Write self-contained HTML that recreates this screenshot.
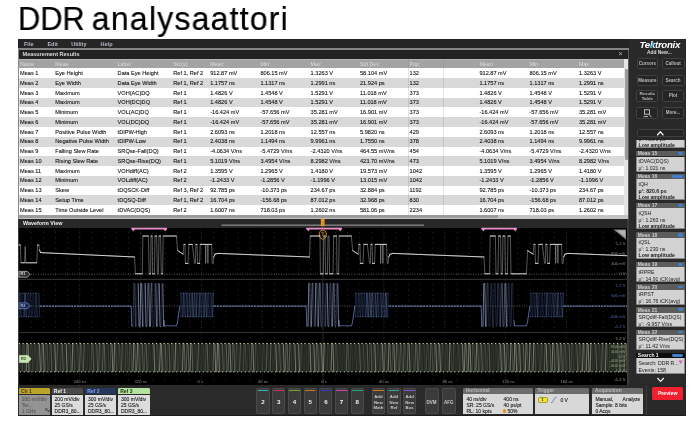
<!DOCTYPE html>
<html lang="fi"><head><meta charset="utf-8"><title>DDR analysaattori</title>
<style>
html,body{margin:0;padding:0;background:#fff;}
body{width:700px;height:430px;overflow:hidden;position:relative;font-family:"Liberation Sans",sans-serif;}
#title{will-change:transform;position:absolute;left:18.3px;top:-1.5px;font-size:33px;-webkit-text-stroke:0.22px #000;line-height:40px;color:#000;white-space:nowrap;transform-origin:0 0;transform:scaleX(0.97);}
#title span{letter-spacing:1.25px;margin-left:-4.6px;}
#title b{font-weight:400;display:inline-block;transform-origin:0 0;transform:scaleX(0.962);}
#scope{position:absolute;left:0;top:0;width:700px;height:430px;filter:blur(0.7px);will-change:transform;}
#scope div{position:absolute;}
#scope span{position:absolute;white-space:nowrap;}
#scope svg{position:absolute;left:0;top:0;}
</style></head><body>
<div id="title"><b>DDR</b> <span>analysaattori</span></div>
<div id="scope">
<div style="left:17.60px;top:39.00px;width:668.40px;height:376.20px;background:#2b2b2b;"></div>
<div style="left:17.60px;top:39.00px;width:668.40px;height:9.30px;background:#252525;"></div>
<span style="left:24.00px;top:40.60px;font-size:5.5px;line-height:6.60px;color:#b4b9c6;font-weight:700;">File</span>
<span style="left:47.40px;top:40.60px;font-size:5.5px;line-height:6.60px;color:#b4b9c6;font-weight:700;">Edit</span>
<span style="left:71.20px;top:40.60px;font-size:5.5px;line-height:6.60px;color:#b4b9c6;font-weight:700;">Utility</span>
<span style="left:100.60px;top:40.60px;font-size:5.5px;line-height:6.60px;color:#b4b9c6;font-weight:700;">Help</span>
<div style="left:17.60px;top:48.00px;width:611.70px;height:2.10px;background:#858585;"></div>
<div style="left:18.60px;top:50.10px;width:609.40px;height:8.70px;background:#222222;"></div>
<span style="left:22.60px;top:51.20px;font-size:5.5px;line-height:6.60px;color:#dcdcdc;font-weight:700;">Measurement Results</span>
<span style="left:520.50px;width:200px;text-align:center;top:50.40px;font-size:7px;line-height:8.40px;color:#bbb;font-weight:400;">×</span>
<div style="left:18.60px;top:58.80px;width:607.40px;height:9.60px;background:#a3a3a3;"></div>
<div style="left:18.60px;top:58.80px;width:607.40px;height:1.00px;background:#b4b4b4;"></div>
<span style="left:20.00px;top:60.52px;font-size:5.3px;line-height:6.36px;color:#dcdcdc;font-weight:400;">Name</span>
<span style="left:55.30px;top:60.52px;font-size:5.3px;line-height:6.36px;color:#dcdcdc;font-weight:400;">Meas</span>
<span style="left:117.60px;top:60.52px;font-size:5.3px;line-height:6.36px;color:#dcdcdc;font-weight:400;">Label</span>
<span style="left:173.30px;top:60.52px;font-size:5.3px;line-height:6.36px;color:#dcdcdc;font-weight:400;">Src(s)</span>
<span style="left:210.20px;top:60.52px;font-size:5.3px;line-height:6.36px;color:#dcdcdc;font-weight:400;">Mean'</span>
<span style="left:260.40px;top:60.52px;font-size:5.3px;line-height:6.36px;color:#dcdcdc;font-weight:400;">Min'</span>
<span style="left:310.60px;top:60.52px;font-size:5.3px;line-height:6.36px;color:#dcdcdc;font-weight:400;">Max'</span>
<span style="left:360.00px;top:60.52px;font-size:5.3px;line-height:6.36px;color:#dcdcdc;font-weight:400;">Std Dev'</span>
<span style="left:409.60px;top:60.52px;font-size:5.3px;line-height:6.36px;color:#dcdcdc;font-weight:400;">Pop'</span>
<span style="left:479.40px;top:60.52px;font-size:5.3px;line-height:6.36px;color:#dcdcdc;font-weight:400;">Mean</span>
<span style="left:529.50px;top:60.52px;font-size:5.3px;line-height:6.36px;color:#dcdcdc;font-weight:400;">Min</span>
<span style="left:579.00px;top:60.52px;font-size:5.3px;line-height:6.36px;color:#dcdcdc;font-weight:400;">Max</span>
<div style="left:18.60px;top:68.40px;width:607.40px;height:9.77px;background:#ffffff;"></div>
<span style="left:20.00px;top:70.01px;font-size:5.62px;line-height:6.74px;color:#141414;font-weight:400;-webkit-text-stroke:0.1px #141414;">Meas 1</span>
<span style="left:55.30px;top:70.01px;font-size:5.62px;line-height:6.74px;color:#141414;font-weight:400;-webkit-text-stroke:0.1px #141414;">Eye Height</span>
<span style="left:117.60px;top:70.01px;font-size:5.62px;line-height:6.74px;color:#141414;font-weight:400;-webkit-text-stroke:0.1px #141414;">Data Eye Height</span>
<span style="left:173.30px;top:70.01px;font-size:5.62px;line-height:6.74px;color:#141414;font-weight:400;-webkit-text-stroke:0.1px #141414;">Ref 1, Ref 2</span>
<span style="left:210.20px;top:70.01px;font-size:5.62px;line-height:6.74px;color:#141414;font-weight:400;-webkit-text-stroke:0.1px #141414;">912.87 mV</span>
<span style="left:260.40px;top:70.01px;font-size:5.62px;line-height:6.74px;color:#141414;font-weight:400;-webkit-text-stroke:0.1px #141414;">806.15 mV</span>
<span style="left:310.60px;top:70.01px;font-size:5.62px;line-height:6.74px;color:#141414;font-weight:400;-webkit-text-stroke:0.1px #141414;">1.3263 V</span>
<span style="left:360.00px;top:70.01px;font-size:5.62px;line-height:6.74px;color:#141414;font-weight:400;-webkit-text-stroke:0.1px #141414;">58.104 mV</span>
<span style="left:409.60px;top:70.01px;font-size:5.62px;line-height:6.74px;color:#141414;font-weight:400;-webkit-text-stroke:0.1px #141414;">132</span>
<span style="left:479.40px;top:70.01px;font-size:5.62px;line-height:6.74px;color:#141414;font-weight:400;-webkit-text-stroke:0.1px #141414;">912.87 mV</span>
<span style="left:529.50px;top:70.01px;font-size:5.62px;line-height:6.74px;color:#141414;font-weight:400;-webkit-text-stroke:0.1px #141414;">806.15 mV</span>
<span style="left:579.00px;top:70.01px;font-size:5.62px;line-height:6.74px;color:#141414;font-weight:400;-webkit-text-stroke:0.1px #141414;">1.3263 V</span>
<div style="left:18.60px;top:78.17px;width:607.40px;height:9.77px;background:#d9d9d9;"></div>
<span style="left:20.00px;top:79.78px;font-size:5.62px;line-height:6.74px;color:#141414;font-weight:400;-webkit-text-stroke:0.1px #141414;">Meas 2</span>
<span style="left:55.30px;top:79.78px;font-size:5.62px;line-height:6.74px;color:#141414;font-weight:400;-webkit-text-stroke:0.1px #141414;">Eye Width</span>
<span style="left:117.60px;top:79.78px;font-size:5.62px;line-height:6.74px;color:#141414;font-weight:400;-webkit-text-stroke:0.1px #141414;">Data Eye Width</span>
<span style="left:173.30px;top:79.78px;font-size:5.62px;line-height:6.74px;color:#141414;font-weight:400;-webkit-text-stroke:0.1px #141414;">Ref 1, Ref 2</span>
<span style="left:210.20px;top:79.78px;font-size:5.62px;line-height:6.74px;color:#141414;font-weight:400;-webkit-text-stroke:0.1px #141414;">1.1757 ns</span>
<span style="left:260.40px;top:79.78px;font-size:5.62px;line-height:6.74px;color:#141414;font-weight:400;-webkit-text-stroke:0.1px #141414;">1.1317 ns</span>
<span style="left:310.60px;top:79.78px;font-size:5.62px;line-height:6.74px;color:#141414;font-weight:400;-webkit-text-stroke:0.1px #141414;">1.2991 ns</span>
<span style="left:360.00px;top:79.78px;font-size:5.62px;line-height:6.74px;color:#141414;font-weight:400;-webkit-text-stroke:0.1px #141414;">21.924 ps</span>
<span style="left:409.60px;top:79.78px;font-size:5.62px;line-height:6.74px;color:#141414;font-weight:400;-webkit-text-stroke:0.1px #141414;">132</span>
<span style="left:479.40px;top:79.78px;font-size:5.62px;line-height:6.74px;color:#141414;font-weight:400;-webkit-text-stroke:0.1px #141414;">1.1757 ns</span>
<span style="left:529.50px;top:79.78px;font-size:5.62px;line-height:6.74px;color:#141414;font-weight:400;-webkit-text-stroke:0.1px #141414;">1.1317 ns</span>
<span style="left:579.00px;top:79.78px;font-size:5.62px;line-height:6.74px;color:#141414;font-weight:400;-webkit-text-stroke:0.1px #141414;">1.2991 ns</span>
<div style="left:18.60px;top:87.94px;width:607.40px;height:9.77px;background:#ffffff;"></div>
<span style="left:20.00px;top:89.55px;font-size:5.62px;line-height:6.74px;color:#141414;font-weight:400;-webkit-text-stroke:0.1px #141414;">Meas 3</span>
<span style="left:55.30px;top:89.55px;font-size:5.62px;line-height:6.74px;color:#141414;font-weight:400;-webkit-text-stroke:0.1px #141414;">Maximum</span>
<span style="left:117.60px;top:89.55px;font-size:5.62px;line-height:6.74px;color:#141414;font-weight:400;-webkit-text-stroke:0.1px #141414;">VOH(AC)DQ</span>
<span style="left:173.30px;top:89.55px;font-size:5.62px;line-height:6.74px;color:#141414;font-weight:400;-webkit-text-stroke:0.1px #141414;">Ref 1</span>
<span style="left:210.20px;top:89.55px;font-size:5.62px;line-height:6.74px;color:#141414;font-weight:400;-webkit-text-stroke:0.1px #141414;">1.4826 V</span>
<span style="left:260.40px;top:89.55px;font-size:5.62px;line-height:6.74px;color:#141414;font-weight:400;-webkit-text-stroke:0.1px #141414;">1.4548 V</span>
<span style="left:310.60px;top:89.55px;font-size:5.62px;line-height:6.74px;color:#141414;font-weight:400;-webkit-text-stroke:0.1px #141414;">1.5291 V</span>
<span style="left:360.00px;top:89.55px;font-size:5.62px;line-height:6.74px;color:#141414;font-weight:400;-webkit-text-stroke:0.1px #141414;">11.018 mV</span>
<span style="left:409.60px;top:89.55px;font-size:5.62px;line-height:6.74px;color:#141414;font-weight:400;-webkit-text-stroke:0.1px #141414;">373</span>
<span style="left:479.40px;top:89.55px;font-size:5.62px;line-height:6.74px;color:#141414;font-weight:400;-webkit-text-stroke:0.1px #141414;">1.4826 V</span>
<span style="left:529.50px;top:89.55px;font-size:5.62px;line-height:6.74px;color:#141414;font-weight:400;-webkit-text-stroke:0.1px #141414;">1.4548 V</span>
<span style="left:579.00px;top:89.55px;font-size:5.62px;line-height:6.74px;color:#141414;font-weight:400;-webkit-text-stroke:0.1px #141414;">1.5291 V</span>
<div style="left:18.60px;top:97.71px;width:607.40px;height:9.77px;background:#d9d9d9;"></div>
<span style="left:20.00px;top:99.32px;font-size:5.62px;line-height:6.74px;color:#141414;font-weight:400;-webkit-text-stroke:0.1px #141414;">Meas 4</span>
<span style="left:55.30px;top:99.32px;font-size:5.62px;line-height:6.74px;color:#141414;font-weight:400;-webkit-text-stroke:0.1px #141414;">Maximum</span>
<span style="left:117.60px;top:99.32px;font-size:5.62px;line-height:6.74px;color:#141414;font-weight:400;-webkit-text-stroke:0.1px #141414;">VOH(DC)DQ</span>
<span style="left:173.30px;top:99.32px;font-size:5.62px;line-height:6.74px;color:#141414;font-weight:400;-webkit-text-stroke:0.1px #141414;">Ref 1</span>
<span style="left:210.20px;top:99.32px;font-size:5.62px;line-height:6.74px;color:#141414;font-weight:400;-webkit-text-stroke:0.1px #141414;">1.4826 V</span>
<span style="left:260.40px;top:99.32px;font-size:5.62px;line-height:6.74px;color:#141414;font-weight:400;-webkit-text-stroke:0.1px #141414;">1.4548 V</span>
<span style="left:310.60px;top:99.32px;font-size:5.62px;line-height:6.74px;color:#141414;font-weight:400;-webkit-text-stroke:0.1px #141414;">1.5291 V</span>
<span style="left:360.00px;top:99.32px;font-size:5.62px;line-height:6.74px;color:#141414;font-weight:400;-webkit-text-stroke:0.1px #141414;">11.018 mV</span>
<span style="left:409.60px;top:99.32px;font-size:5.62px;line-height:6.74px;color:#141414;font-weight:400;-webkit-text-stroke:0.1px #141414;">373</span>
<span style="left:479.40px;top:99.32px;font-size:5.62px;line-height:6.74px;color:#141414;font-weight:400;-webkit-text-stroke:0.1px #141414;">1.4826 V</span>
<span style="left:529.50px;top:99.32px;font-size:5.62px;line-height:6.74px;color:#141414;font-weight:400;-webkit-text-stroke:0.1px #141414;">1.4548 V</span>
<span style="left:579.00px;top:99.32px;font-size:5.62px;line-height:6.74px;color:#141414;font-weight:400;-webkit-text-stroke:0.1px #141414;">1.5291 V</span>
<div style="left:18.60px;top:107.48px;width:607.40px;height:9.77px;background:#ffffff;"></div>
<span style="left:20.00px;top:109.09px;font-size:5.62px;line-height:6.74px;color:#141414;font-weight:400;-webkit-text-stroke:0.1px #141414;">Meas 5</span>
<span style="left:55.30px;top:109.09px;font-size:5.62px;line-height:6.74px;color:#141414;font-weight:400;-webkit-text-stroke:0.1px #141414;">Minimum</span>
<span style="left:117.60px;top:109.09px;font-size:5.62px;line-height:6.74px;color:#141414;font-weight:400;-webkit-text-stroke:0.1px #141414;">VOL(AC)DQ</span>
<span style="left:173.30px;top:109.09px;font-size:5.62px;line-height:6.74px;color:#141414;font-weight:400;-webkit-text-stroke:0.1px #141414;">Ref 1</span>
<span style="left:210.20px;top:109.09px;font-size:5.62px;line-height:6.74px;color:#141414;font-weight:400;-webkit-text-stroke:0.1px #141414;">-16.424 mV</span>
<span style="left:260.40px;top:109.09px;font-size:5.62px;line-height:6.74px;color:#141414;font-weight:400;-webkit-text-stroke:0.1px #141414;">-57.656 mV</span>
<span style="left:310.60px;top:109.09px;font-size:5.62px;line-height:6.74px;color:#141414;font-weight:400;-webkit-text-stroke:0.1px #141414;">35.281 mV</span>
<span style="left:360.00px;top:109.09px;font-size:5.62px;line-height:6.74px;color:#141414;font-weight:400;-webkit-text-stroke:0.1px #141414;">16.901 mV</span>
<span style="left:409.60px;top:109.09px;font-size:5.62px;line-height:6.74px;color:#141414;font-weight:400;-webkit-text-stroke:0.1px #141414;">373</span>
<span style="left:479.40px;top:109.09px;font-size:5.62px;line-height:6.74px;color:#141414;font-weight:400;-webkit-text-stroke:0.1px #141414;">-16.424 mV</span>
<span style="left:529.50px;top:109.09px;font-size:5.62px;line-height:6.74px;color:#141414;font-weight:400;-webkit-text-stroke:0.1px #141414;">-57.656 mV</span>
<span style="left:579.00px;top:109.09px;font-size:5.62px;line-height:6.74px;color:#141414;font-weight:400;-webkit-text-stroke:0.1px #141414;">35.281 mV</span>
<div style="left:18.60px;top:117.25px;width:607.40px;height:9.77px;background:#d9d9d9;"></div>
<span style="left:20.00px;top:118.86px;font-size:5.62px;line-height:6.74px;color:#141414;font-weight:400;-webkit-text-stroke:0.1px #141414;">Meas 6</span>
<span style="left:55.30px;top:118.86px;font-size:5.62px;line-height:6.74px;color:#141414;font-weight:400;-webkit-text-stroke:0.1px #141414;">Minimum</span>
<span style="left:117.60px;top:118.86px;font-size:5.62px;line-height:6.74px;color:#141414;font-weight:400;-webkit-text-stroke:0.1px #141414;">VOL(DC)DQ</span>
<span style="left:173.30px;top:118.86px;font-size:5.62px;line-height:6.74px;color:#141414;font-weight:400;-webkit-text-stroke:0.1px #141414;">Ref 1</span>
<span style="left:210.20px;top:118.86px;font-size:5.62px;line-height:6.74px;color:#141414;font-weight:400;-webkit-text-stroke:0.1px #141414;">-16.424 mV</span>
<span style="left:260.40px;top:118.86px;font-size:5.62px;line-height:6.74px;color:#141414;font-weight:400;-webkit-text-stroke:0.1px #141414;">-57.656 mV</span>
<span style="left:310.60px;top:118.86px;font-size:5.62px;line-height:6.74px;color:#141414;font-weight:400;-webkit-text-stroke:0.1px #141414;">35.281 mV</span>
<span style="left:360.00px;top:118.86px;font-size:5.62px;line-height:6.74px;color:#141414;font-weight:400;-webkit-text-stroke:0.1px #141414;">16.901 mV</span>
<span style="left:409.60px;top:118.86px;font-size:5.62px;line-height:6.74px;color:#141414;font-weight:400;-webkit-text-stroke:0.1px #141414;">373</span>
<span style="left:479.40px;top:118.86px;font-size:5.62px;line-height:6.74px;color:#141414;font-weight:400;-webkit-text-stroke:0.1px #141414;">-16.424 mV</span>
<span style="left:529.50px;top:118.86px;font-size:5.62px;line-height:6.74px;color:#141414;font-weight:400;-webkit-text-stroke:0.1px #141414;">-57.656 mV</span>
<span style="left:579.00px;top:118.86px;font-size:5.62px;line-height:6.74px;color:#141414;font-weight:400;-webkit-text-stroke:0.1px #141414;">35.281 mV</span>
<div style="left:18.60px;top:127.02px;width:607.40px;height:9.77px;background:#ffffff;"></div>
<span style="left:20.00px;top:128.63px;font-size:5.62px;line-height:6.74px;color:#141414;font-weight:400;-webkit-text-stroke:0.1px #141414;">Meas 7</span>
<span style="left:55.30px;top:128.63px;font-size:5.62px;line-height:6.74px;color:#141414;font-weight:400;-webkit-text-stroke:0.1px #141414;">Positive Pulse Width</span>
<span style="left:117.60px;top:128.63px;font-size:5.62px;line-height:6.74px;color:#141414;font-weight:400;-webkit-text-stroke:0.1px #141414;">tDIPW-High</span>
<span style="left:173.30px;top:128.63px;font-size:5.62px;line-height:6.74px;color:#141414;font-weight:400;-webkit-text-stroke:0.1px #141414;">Ref 1</span>
<span style="left:210.20px;top:128.63px;font-size:5.62px;line-height:6.74px;color:#141414;font-weight:400;-webkit-text-stroke:0.1px #141414;">2.6093 ns</span>
<span style="left:260.40px;top:128.63px;font-size:5.62px;line-height:6.74px;color:#141414;font-weight:400;-webkit-text-stroke:0.1px #141414;">1.2018 ns</span>
<span style="left:310.60px;top:128.63px;font-size:5.62px;line-height:6.74px;color:#141414;font-weight:400;-webkit-text-stroke:0.1px #141414;">12.557 ns</span>
<span style="left:360.00px;top:128.63px;font-size:5.62px;line-height:6.74px;color:#141414;font-weight:400;-webkit-text-stroke:0.1px #141414;">5.9820 ns</span>
<span style="left:409.60px;top:128.63px;font-size:5.62px;line-height:6.74px;color:#141414;font-weight:400;-webkit-text-stroke:0.1px #141414;">429</span>
<span style="left:479.40px;top:128.63px;font-size:5.62px;line-height:6.74px;color:#141414;font-weight:400;-webkit-text-stroke:0.1px #141414;">2.6093 ns</span>
<span style="left:529.50px;top:128.63px;font-size:5.62px;line-height:6.74px;color:#141414;font-weight:400;-webkit-text-stroke:0.1px #141414;">1.2018 ns</span>
<span style="left:579.00px;top:128.63px;font-size:5.62px;line-height:6.74px;color:#141414;font-weight:400;-webkit-text-stroke:0.1px #141414;">12.557 ns</span>
<div style="left:18.60px;top:136.79px;width:607.40px;height:9.77px;background:#d9d9d9;"></div>
<span style="left:20.00px;top:138.40px;font-size:5.62px;line-height:6.74px;color:#141414;font-weight:400;-webkit-text-stroke:0.1px #141414;">Meas 8</span>
<span style="left:55.30px;top:138.40px;font-size:5.62px;line-height:6.74px;color:#141414;font-weight:400;-webkit-text-stroke:0.1px #141414;">Negative Pulse Width</span>
<span style="left:117.60px;top:138.40px;font-size:5.62px;line-height:6.74px;color:#141414;font-weight:400;-webkit-text-stroke:0.1px #141414;">tDIPW-Low</span>
<span style="left:173.30px;top:138.40px;font-size:5.62px;line-height:6.74px;color:#141414;font-weight:400;-webkit-text-stroke:0.1px #141414;">Ref 1</span>
<span style="left:210.20px;top:138.40px;font-size:5.62px;line-height:6.74px;color:#141414;font-weight:400;-webkit-text-stroke:0.1px #141414;">2.4038 ns</span>
<span style="left:260.40px;top:138.40px;font-size:5.62px;line-height:6.74px;color:#141414;font-weight:400;-webkit-text-stroke:0.1px #141414;">1.1494 ns</span>
<span style="left:310.60px;top:138.40px;font-size:5.62px;line-height:6.74px;color:#141414;font-weight:400;-webkit-text-stroke:0.1px #141414;">9.9961 ns</span>
<span style="left:360.00px;top:138.40px;font-size:5.62px;line-height:6.74px;color:#141414;font-weight:400;-webkit-text-stroke:0.1px #141414;">1.7550 ns</span>
<span style="left:409.60px;top:138.40px;font-size:5.62px;line-height:6.74px;color:#141414;font-weight:400;-webkit-text-stroke:0.1px #141414;">378</span>
<span style="left:479.40px;top:138.40px;font-size:5.62px;line-height:6.74px;color:#141414;font-weight:400;-webkit-text-stroke:0.1px #141414;">2.4038 ns</span>
<span style="left:529.50px;top:138.40px;font-size:5.62px;line-height:6.74px;color:#141414;font-weight:400;-webkit-text-stroke:0.1px #141414;">1.1494 ns</span>
<span style="left:579.00px;top:138.40px;font-size:5.62px;line-height:6.74px;color:#141414;font-weight:400;-webkit-text-stroke:0.1px #141414;">9.9961 ns</span>
<div style="left:18.60px;top:146.56px;width:607.40px;height:9.77px;background:#ffffff;"></div>
<span style="left:20.00px;top:148.17px;font-size:5.62px;line-height:6.74px;color:#141414;font-weight:400;-webkit-text-stroke:0.1px #141414;">Meas 9</span>
<span style="left:55.30px;top:148.17px;font-size:5.62px;line-height:6.74px;color:#141414;font-weight:400;-webkit-text-stroke:0.1px #141414;">Falling Slew Rate</span>
<span style="left:117.60px;top:148.17px;font-size:5.62px;line-height:6.74px;color:#141414;font-weight:400;-webkit-text-stroke:0.1px #141414;">SRQse-Fall(DQ)</span>
<span style="left:173.30px;top:148.17px;font-size:5.62px;line-height:6.74px;color:#141414;font-weight:400;-webkit-text-stroke:0.1px #141414;">Ref 1</span>
<span style="left:210.20px;top:148.17px;font-size:5.62px;line-height:6.74px;color:#141414;font-weight:400;-webkit-text-stroke:0.1px #141414;">-4.0634 V/ns</span>
<span style="left:260.40px;top:148.17px;font-size:5.62px;line-height:6.74px;color:#141414;font-weight:400;-webkit-text-stroke:0.1px #141414;">-5.4729 V/ns</span>
<span style="left:310.60px;top:148.17px;font-size:5.62px;line-height:6.74px;color:#141414;font-weight:400;-webkit-text-stroke:0.1px #141414;">-2.4320 V/ns</span>
<span style="left:360.00px;top:148.17px;font-size:5.62px;line-height:6.74px;color:#141414;font-weight:400;-webkit-text-stroke:0.1px #141414;">464.55 mV/ns</span>
<span style="left:409.60px;top:148.17px;font-size:5.62px;line-height:6.74px;color:#141414;font-weight:400;-webkit-text-stroke:0.1px #141414;">454</span>
<span style="left:479.40px;top:148.17px;font-size:5.62px;line-height:6.74px;color:#141414;font-weight:400;-webkit-text-stroke:0.1px #141414;">-4.0634 V/ns</span>
<span style="left:529.50px;top:148.17px;font-size:5.62px;line-height:6.74px;color:#141414;font-weight:400;-webkit-text-stroke:0.1px #141414;">-5.4729 V/ns</span>
<span style="left:579.00px;top:148.17px;font-size:5.62px;line-height:6.74px;color:#141414;font-weight:400;-webkit-text-stroke:0.1px #141414;">-2.4320 V/ns</span>
<div style="left:18.60px;top:156.33px;width:607.40px;height:9.77px;background:#d9d9d9;"></div>
<span style="left:20.00px;top:157.94px;font-size:5.62px;line-height:6.74px;color:#141414;font-weight:400;-webkit-text-stroke:0.1px #141414;">Meas 10</span>
<span style="left:55.30px;top:157.94px;font-size:5.62px;line-height:6.74px;color:#141414;font-weight:400;-webkit-text-stroke:0.1px #141414;">Rising Slew Rate</span>
<span style="left:117.60px;top:157.94px;font-size:5.62px;line-height:6.74px;color:#141414;font-weight:400;-webkit-text-stroke:0.1px #141414;">SRQse-Rise(DQ)</span>
<span style="left:173.30px;top:157.94px;font-size:5.62px;line-height:6.74px;color:#141414;font-weight:400;-webkit-text-stroke:0.1px #141414;">Ref 1</span>
<span style="left:210.20px;top:157.94px;font-size:5.62px;line-height:6.74px;color:#141414;font-weight:400;-webkit-text-stroke:0.1px #141414;">5.1019 V/ns</span>
<span style="left:260.40px;top:157.94px;font-size:5.62px;line-height:6.74px;color:#141414;font-weight:400;-webkit-text-stroke:0.1px #141414;">3.4954 V/ns</span>
<span style="left:310.60px;top:157.94px;font-size:5.62px;line-height:6.74px;color:#141414;font-weight:400;-webkit-text-stroke:0.1px #141414;">8.2982 V/ns</span>
<span style="left:360.00px;top:157.94px;font-size:5.62px;line-height:6.74px;color:#141414;font-weight:400;-webkit-text-stroke:0.1px #141414;">423.70 mV/ns</span>
<span style="left:409.60px;top:157.94px;font-size:5.62px;line-height:6.74px;color:#141414;font-weight:400;-webkit-text-stroke:0.1px #141414;">473</span>
<span style="left:479.40px;top:157.94px;font-size:5.62px;line-height:6.74px;color:#141414;font-weight:400;-webkit-text-stroke:0.1px #141414;">5.1019 V/ns</span>
<span style="left:529.50px;top:157.94px;font-size:5.62px;line-height:6.74px;color:#141414;font-weight:400;-webkit-text-stroke:0.1px #141414;">3.4954 V/ns</span>
<span style="left:579.00px;top:157.94px;font-size:5.62px;line-height:6.74px;color:#141414;font-weight:400;-webkit-text-stroke:0.1px #141414;">8.2982 V/ns</span>
<div style="left:18.60px;top:166.10px;width:607.40px;height:9.77px;background:#ffffff;"></div>
<span style="left:20.00px;top:167.71px;font-size:5.62px;line-height:6.74px;color:#141414;font-weight:400;-webkit-text-stroke:0.1px #141414;">Meas 11</span>
<span style="left:55.30px;top:167.71px;font-size:5.62px;line-height:6.74px;color:#141414;font-weight:400;-webkit-text-stroke:0.1px #141414;">Maximum</span>
<span style="left:117.60px;top:167.71px;font-size:5.62px;line-height:6.74px;color:#141414;font-weight:400;-webkit-text-stroke:0.1px #141414;">VOHdiff(AC)</span>
<span style="left:173.30px;top:167.71px;font-size:5.62px;line-height:6.74px;color:#141414;font-weight:400;-webkit-text-stroke:0.1px #141414;">Ref 2</span>
<span style="left:210.20px;top:167.71px;font-size:5.62px;line-height:6.74px;color:#141414;font-weight:400;-webkit-text-stroke:0.1px #141414;">1.3595 V</span>
<span style="left:260.40px;top:167.71px;font-size:5.62px;line-height:6.74px;color:#141414;font-weight:400;-webkit-text-stroke:0.1px #141414;">1.2965 V</span>
<span style="left:310.60px;top:167.71px;font-size:5.62px;line-height:6.74px;color:#141414;font-weight:400;-webkit-text-stroke:0.1px #141414;">1.4180 V</span>
<span style="left:360.00px;top:167.71px;font-size:5.62px;line-height:6.74px;color:#141414;font-weight:400;-webkit-text-stroke:0.1px #141414;">19.573 mV</span>
<span style="left:409.60px;top:167.71px;font-size:5.62px;line-height:6.74px;color:#141414;font-weight:400;-webkit-text-stroke:0.1px #141414;">1042</span>
<span style="left:479.40px;top:167.71px;font-size:5.62px;line-height:6.74px;color:#141414;font-weight:400;-webkit-text-stroke:0.1px #141414;">1.3595 V</span>
<span style="left:529.50px;top:167.71px;font-size:5.62px;line-height:6.74px;color:#141414;font-weight:400;-webkit-text-stroke:0.1px #141414;">1.2965 V</span>
<span style="left:579.00px;top:167.71px;font-size:5.62px;line-height:6.74px;color:#141414;font-weight:400;-webkit-text-stroke:0.1px #141414;">1.4180 V</span>
<div style="left:18.60px;top:175.87px;width:607.40px;height:9.77px;background:#d9d9d9;"></div>
<span style="left:20.00px;top:177.48px;font-size:5.62px;line-height:6.74px;color:#141414;font-weight:400;-webkit-text-stroke:0.1px #141414;">Meas 12</span>
<span style="left:55.30px;top:177.48px;font-size:5.62px;line-height:6.74px;color:#141414;font-weight:400;-webkit-text-stroke:0.1px #141414;">Minimum</span>
<span style="left:117.60px;top:177.48px;font-size:5.62px;line-height:6.74px;color:#141414;font-weight:400;-webkit-text-stroke:0.1px #141414;">VOLdiff(AC)</span>
<span style="left:173.30px;top:177.48px;font-size:5.62px;line-height:6.74px;color:#141414;font-weight:400;-webkit-text-stroke:0.1px #141414;">Ref 2</span>
<span style="left:210.20px;top:177.48px;font-size:5.62px;line-height:6.74px;color:#141414;font-weight:400;-webkit-text-stroke:0.1px #141414;">-1.2433 V</span>
<span style="left:260.40px;top:177.48px;font-size:5.62px;line-height:6.74px;color:#141414;font-weight:400;-webkit-text-stroke:0.1px #141414;">-1.2856 V</span>
<span style="left:310.60px;top:177.48px;font-size:5.62px;line-height:6.74px;color:#141414;font-weight:400;-webkit-text-stroke:0.1px #141414;">-1.1996 V</span>
<span style="left:360.00px;top:177.48px;font-size:5.62px;line-height:6.74px;color:#141414;font-weight:400;-webkit-text-stroke:0.1px #141414;">13.015 mV</span>
<span style="left:409.60px;top:177.48px;font-size:5.62px;line-height:6.74px;color:#141414;font-weight:400;-webkit-text-stroke:0.1px #141414;">1042</span>
<span style="left:479.40px;top:177.48px;font-size:5.62px;line-height:6.74px;color:#141414;font-weight:400;-webkit-text-stroke:0.1px #141414;">-1.2433 V</span>
<span style="left:529.50px;top:177.48px;font-size:5.62px;line-height:6.74px;color:#141414;font-weight:400;-webkit-text-stroke:0.1px #141414;">-1.2856 V</span>
<span style="left:579.00px;top:177.48px;font-size:5.62px;line-height:6.74px;color:#141414;font-weight:400;-webkit-text-stroke:0.1px #141414;">-1.1996 V</span>
<div style="left:18.60px;top:185.64px;width:607.40px;height:9.77px;background:#ffffff;"></div>
<span style="left:20.00px;top:187.25px;font-size:5.62px;line-height:6.74px;color:#141414;font-weight:400;-webkit-text-stroke:0.1px #141414;">Meas 13</span>
<span style="left:55.30px;top:187.25px;font-size:5.62px;line-height:6.74px;color:#141414;font-weight:400;-webkit-text-stroke:0.1px #141414;">Skew</span>
<span style="left:117.60px;top:187.25px;font-size:5.62px;line-height:6.74px;color:#141414;font-weight:400;-webkit-text-stroke:0.1px #141414;">tDQSCK-Diff</span>
<span style="left:173.30px;top:187.25px;font-size:5.62px;line-height:6.74px;color:#141414;font-weight:400;-webkit-text-stroke:0.1px #141414;">Ref 3, Ref 2</span>
<span style="left:210.20px;top:187.25px;font-size:5.62px;line-height:6.74px;color:#141414;font-weight:400;-webkit-text-stroke:0.1px #141414;">92.785 ps</span>
<span style="left:260.40px;top:187.25px;font-size:5.62px;line-height:6.74px;color:#141414;font-weight:400;-webkit-text-stroke:0.1px #141414;">-10.373 ps</span>
<span style="left:310.60px;top:187.25px;font-size:5.62px;line-height:6.74px;color:#141414;font-weight:400;-webkit-text-stroke:0.1px #141414;">234.67 ps</span>
<span style="left:360.00px;top:187.25px;font-size:5.62px;line-height:6.74px;color:#141414;font-weight:400;-webkit-text-stroke:0.1px #141414;">32.884 ps</span>
<span style="left:409.60px;top:187.25px;font-size:5.62px;line-height:6.74px;color:#141414;font-weight:400;-webkit-text-stroke:0.1px #141414;">1192</span>
<span style="left:479.40px;top:187.25px;font-size:5.62px;line-height:6.74px;color:#141414;font-weight:400;-webkit-text-stroke:0.1px #141414;">92.785 ps</span>
<span style="left:529.50px;top:187.25px;font-size:5.62px;line-height:6.74px;color:#141414;font-weight:400;-webkit-text-stroke:0.1px #141414;">-10.373 ps</span>
<span style="left:579.00px;top:187.25px;font-size:5.62px;line-height:6.74px;color:#141414;font-weight:400;-webkit-text-stroke:0.1px #141414;">234.67 ps</span>
<div style="left:18.60px;top:195.41px;width:607.40px;height:9.77px;background:#d9d9d9;"></div>
<span style="left:20.00px;top:197.02px;font-size:5.62px;line-height:6.74px;color:#141414;font-weight:400;-webkit-text-stroke:0.1px #141414;">Meas 14</span>
<span style="left:55.30px;top:197.02px;font-size:5.62px;line-height:6.74px;color:#141414;font-weight:400;-webkit-text-stroke:0.1px #141414;">Setup Time</span>
<span style="left:117.60px;top:197.02px;font-size:5.62px;line-height:6.74px;color:#141414;font-weight:400;-webkit-text-stroke:0.1px #141414;">tDQSQ-Diff</span>
<span style="left:173.30px;top:197.02px;font-size:5.62px;line-height:6.74px;color:#141414;font-weight:400;-webkit-text-stroke:0.1px #141414;">Ref 1, Ref 2</span>
<span style="left:210.20px;top:197.02px;font-size:5.62px;line-height:6.74px;color:#141414;font-weight:400;-webkit-text-stroke:0.1px #141414;">16.704 ps</span>
<span style="left:260.40px;top:197.02px;font-size:5.62px;line-height:6.74px;color:#141414;font-weight:400;-webkit-text-stroke:0.1px #141414;">-156.68 ps</span>
<span style="left:310.60px;top:197.02px;font-size:5.62px;line-height:6.74px;color:#141414;font-weight:400;-webkit-text-stroke:0.1px #141414;">87.012 ps</span>
<span style="left:360.00px;top:197.02px;font-size:5.62px;line-height:6.74px;color:#141414;font-weight:400;-webkit-text-stroke:0.1px #141414;">32.968 ps</span>
<span style="left:409.60px;top:197.02px;font-size:5.62px;line-height:6.74px;color:#141414;font-weight:400;-webkit-text-stroke:0.1px #141414;">830</span>
<span style="left:479.40px;top:197.02px;font-size:5.62px;line-height:6.74px;color:#141414;font-weight:400;-webkit-text-stroke:0.1px #141414;">16.704 ps</span>
<span style="left:529.50px;top:197.02px;font-size:5.62px;line-height:6.74px;color:#141414;font-weight:400;-webkit-text-stroke:0.1px #141414;">-156.68 ps</span>
<span style="left:579.00px;top:197.02px;font-size:5.62px;line-height:6.74px;color:#141414;font-weight:400;-webkit-text-stroke:0.1px #141414;">87.012 ps</span>
<div style="left:18.60px;top:205.18px;width:607.40px;height:9.77px;background:#ffffff;"></div>
<span style="left:20.00px;top:206.79px;font-size:5.62px;line-height:6.74px;color:#141414;font-weight:400;-webkit-text-stroke:0.1px #141414;">Meas 15</span>
<span style="left:55.30px;top:206.79px;font-size:5.62px;line-height:6.74px;color:#141414;font-weight:400;-webkit-text-stroke:0.1px #141414;">Time Outside Level</span>
<span style="left:117.60px;top:206.79px;font-size:5.62px;line-height:6.74px;color:#141414;font-weight:400;-webkit-text-stroke:0.1px #141414;">tDVAC(DQS)</span>
<span style="left:173.30px;top:206.79px;font-size:5.62px;line-height:6.74px;color:#141414;font-weight:400;-webkit-text-stroke:0.1px #141414;">Ref 2</span>
<span style="left:210.20px;top:206.79px;font-size:5.62px;line-height:6.74px;color:#141414;font-weight:400;-webkit-text-stroke:0.1px #141414;">1.6007 ns</span>
<span style="left:260.40px;top:206.79px;font-size:5.62px;line-height:6.74px;color:#141414;font-weight:400;-webkit-text-stroke:0.1px #141414;">718.03 ps</span>
<span style="left:310.60px;top:206.79px;font-size:5.62px;line-height:6.74px;color:#141414;font-weight:400;-webkit-text-stroke:0.1px #141414;">1.2602 ns</span>
<span style="left:360.00px;top:206.79px;font-size:5.62px;line-height:6.74px;color:#141414;font-weight:400;-webkit-text-stroke:0.1px #141414;">581.06 ps</span>
<span style="left:409.60px;top:206.79px;font-size:5.62px;line-height:6.74px;color:#141414;font-weight:400;-webkit-text-stroke:0.1px #141414;">2234</span>
<span style="left:479.40px;top:206.79px;font-size:5.62px;line-height:6.74px;color:#141414;font-weight:400;-webkit-text-stroke:0.1px #141414;">1.6007 ns</span>
<span style="left:529.50px;top:206.79px;font-size:5.62px;line-height:6.74px;color:#141414;font-weight:400;-webkit-text-stroke:0.1px #141414;">718.03 ps</span>
<span style="left:579.00px;top:206.79px;font-size:5.62px;line-height:6.74px;color:#141414;font-weight:400;-webkit-text-stroke:0.1px #141414;">1.2602 ns</span>
<div style="left:408.00px;top:59.00px;width:0.50px;height:155.95px;background:rgba(120,120,120,.2);"></div>
<div style="left:443.00px;top:59.00px;width:0.50px;height:155.95px;background:rgba(120,120,120,.2);"></div>
<div style="left:624.30px;top:59.00px;width:4.00px;height:155.95px;background:#e4e4e4;"></div>
<div style="left:625.00px;top:69.00px;width:2.60px;height:91.00px;background:#9a9a9a;border-radius:1px;"></div>
<div style="left:18.60px;top:214.95px;width:609.70px;height:4.05px;background:#c4c4c4;"></div>
<div style="left:18.60px;top:215.25px;width:479.40px;height:2.35px;background:#9c9c9c;"></div>
<div style="left:17.60px;top:50.10px;width:1.70px;height:168.90px;background:#8a8a8a;"></div>
<div style="left:628.00px;top:50.20px;width:1.30px;height:168.80px;background:#5a5a5a;"></div>
<div style="left:629.30px;top:39.00px;width:56.70px;height:376.20px;background:#292929;"></div>
<span style="left:559.80px;width:200px;text-align:center;top:39.08px;font-size:9.7px;line-height:11.64px;color:#ffffff;font-weight:700;letter-spacing:-0.32px;font-style:italic;">Tektronix</span>
<svg width="700" height="430" viewBox="0 0 700 430"><path d="M650.2 48.1l2.5-5.6h1.7l-2.5 5.6z" fill="#29a6e6"/></svg>
<span style="left:559.40px;width:200px;text-align:center;top:49.56px;font-size:4.9px;line-height:5.88px;color:#dcdcdc;font-weight:700;">Add New...</span>
<div style="left:636.60px;top:58.00px;width:21.60px;height:11.00px;background:#252525;border:0.7px solid #404040;border-radius:1.6px;box-sizing:border-box;"></div>
<span style="left:547.40px;width:200px;text-align:center;top:61.00px;font-size:4.5px;line-height:5.40px;color:#bcbcbc;font-weight:700;">Cursors</span>
<div style="left:661.60px;top:58.00px;width:23.00px;height:11.00px;background:#252525;border:0.7px solid #404040;border-radius:1.6px;box-sizing:border-box;"></div>
<span style="left:573.10px;width:200px;text-align:center;top:61.00px;font-size:4.5px;line-height:5.40px;color:#bcbcbc;font-weight:700;">Callout</span>
<div style="left:636.60px;top:74.60px;width:21.60px;height:11.00px;background:#252525;border:0.7px solid #404040;border-radius:1.6px;box-sizing:border-box;"></div>
<span style="left:547.40px;width:200px;text-align:center;top:77.60px;font-size:4.5px;line-height:5.40px;color:#bcbcbc;font-weight:700;">Measure</span>
<div style="left:661.60px;top:74.60px;width:23.00px;height:11.00px;background:#252525;border:0.7px solid #404040;border-radius:1.6px;box-sizing:border-box;"></div>
<span style="left:573.10px;width:200px;text-align:center;top:77.60px;font-size:4.5px;line-height:5.40px;color:#bcbcbc;font-weight:700;">Search</span>
<div style="left:636.30px;top:89.70px;width:22.10px;height:12.20px;background:#252525;border:0.7px solid #404040;border-radius:1.6px;box-sizing:border-box;"></div>
<span style="left:547.35px;width:200px;text-align:center;top:90.86px;font-size:4.4px;line-height:5.28px;color:#bcbcbc;font-weight:700;">Results</span>
<span style="left:547.35px;width:200px;text-align:center;top:95.56px;font-size:4.4px;line-height:5.28px;color:#bcbcbc;font-weight:700;">Table</span>
<div style="left:662.00px;top:89.70px;width:22.00px;height:12.20px;background:#252525;border:0.7px solid #404040;border-radius:1.6px;box-sizing:border-box;"></div>
<span style="left:573.00px;width:200px;text-align:center;top:93.30px;font-size:4.5px;line-height:5.40px;color:#bcbcbc;font-weight:700;">Plot</span>
<div style="left:636.30px;top:106.60px;width:22.10px;height:12.60px;background:#252525;border:0.7px solid #404040;border-radius:1.6px;box-sizing:border-box;"></div>
<div style="left:662.00px;top:106.60px;width:22.00px;height:12.60px;background:#252525;border:0.7px solid #404040;border-radius:1.6px;box-sizing:border-box;"></div>
<span style="left:573.00px;width:200px;text-align:center;top:110.40px;font-size:4.5px;line-height:5.40px;color:#bcbcbc;font-weight:700;">More...</span>
<svg width="700" height="430" viewBox="0 0 700 430"><g fill="none" stroke="#e0e0e0" stroke-width="0.8"><rect x="644.6" y="109.8" width="5" height="4.4"/><path d="M649 114.4l2.6 2.8M643.6 116.6h4.4"/></g></svg>
<div style="left:636.60px;top:129.30px;width:47.40px;height:7.90px;background:#252525;border:0.7px solid #404040;border-radius:1.6px;box-sizing:border-box;"></div>
<svg width="700" height="430" viewBox="0 0 700 430"><path d="M657.2 135.2l3.1-3.4 3.1 3.4" fill="none" stroke="#f0f0f0" stroke-width="1.3"/></svg>
<div style="left:635.60px;top:139.60px;width:49.40px;height:8.80px;background:#d2d2d2;border:0.8px solid #8a8a8a;border-top:0;box-sizing:border-box;"></div>
<span style="left:638.60px;top:136.48px;font-size:5.2px;line-height:6.24px;color:#1a1a1a;font-weight:400;clip-path:inset(50% 0 0 0);">μ': 789.6 ps</span>
<span style="left:638.60px;top:142.08px;font-size:5.2px;line-height:6.24px;color:#1a1a1a;font-weight:700;">Low amplitude</span>
<div style="left:635.60px;top:150.60px;width:49.40px;height:5.90px;background:#5c5c5c;"></div>
<span style="left:637.80px;top:150.35px;font-size:5.0px;line-height:6.00px;color:#cfcfcf;font-weight:700;">Meas 15</span>
<div style="left:677.80px;top:151.90px;width:5.60px;height:3.40px;background:#3f7fd0;border-radius:1.4px;"></div>
<div style="left:635.60px;top:156.50px;width:49.40px;height:15.70px;background:#d2d2d2;border:0.8px solid #8a8a8a;border-top:0;box-sizing:border-box;border-radius:0 0 1.5px 1.5px;"></div>
<div style="left:635.60px;top:156.50px;width:49.40px;height:15.70px;overflow:hidden;">
<span style="left:3.0px;top:1.60px;font-size:5.2px;line-height:6.2px;color:#1a1a1a;font-weight:400;">tDVAC(DQS)</span>
<span style="left:3.0px;top:8.60px;font-size:5.2px;line-height:6.2px;color:#1a1a1a;font-weight:400;">μ': 1.021 ns</span>
</div>
<div style="left:635.60px;top:173.80px;width:49.40px;height:5.40px;background:#5c5c5c;"></div>
<span style="left:637.80px;top:173.30px;font-size:5.0px;line-height:6.00px;color:#cfcfcf;font-weight:700;">Meas 16</span>
<div style="left:672.40px;top:175.10px;width:11.00px;height:2.90px;background:#3f7fd0;border-radius:1.4px;"></div>
<div style="left:635.60px;top:179.20px;width:49.40px;height:21.10px;background:#d2d2d2;border:0.8px solid #8a8a8a;border-top:0;box-sizing:border-box;border-radius:0 0 1.5px 1.5px;"></div>
<div style="left:635.60px;top:179.20px;width:49.40px;height:21.10px;overflow:hidden;">
<span style="left:3.0px;top:1.60px;font-size:5.2px;line-height:6.2px;color:#1a1a1a;font-weight:400;">tQH</span>
<span style="left:3.0px;top:8.60px;font-size:5.2px;line-height:6.2px;color:#1a1a1a;font-weight:700;">μ': 820.6 ps</span>
<span style="left:3.0px;top:14.40px;font-size:5.2px;line-height:6.2px;color:#1a1a1a;font-weight:700;">Low amplitude</span>
</div>
<div style="left:635.60px;top:203.00px;width:49.40px;height:5.20px;background:#5c5c5c;"></div>
<span style="left:637.80px;top:202.40px;font-size:5.0px;line-height:6.00px;color:#cfcfcf;font-weight:700;">Meas 17</span>
<div style="left:677.80px;top:204.30px;width:5.60px;height:2.70px;background:#3f7fd0;border-radius:1.4px;"></div>
<div style="left:635.60px;top:208.20px;width:49.40px;height:21.00px;background:#d2d2d2;border:0.8px solid #8a8a8a;border-top:0;box-sizing:border-box;border-radius:0 0 1.5px 1.5px;"></div>
<div style="left:635.60px;top:208.20px;width:49.40px;height:21.00px;overflow:hidden;">
<span style="left:3.0px;top:1.60px;font-size:5.2px;line-height:6.2px;color:#1a1a1a;font-weight:400;">tQSH</span>
<span style="left:3.0px;top:8.60px;font-size:5.2px;line-height:6.2px;color:#1a1a1a;font-weight:400;">μ': 1.263 ns</span>
<span style="left:3.0px;top:14.40px;font-size:5.2px;line-height:6.2px;color:#1a1a1a;font-weight:700;">Low amplitude</span>
</div>
<div style="left:635.60px;top:232.00px;width:49.40px;height:5.80px;background:#5c5c5c;"></div>
<span style="left:637.80px;top:231.70px;font-size:5.0px;line-height:6.00px;color:#cfcfcf;font-weight:700;">Meas 18</span>
<div style="left:677.80px;top:233.30px;width:5.60px;height:3.30px;background:#3f7fd0;border-radius:1.4px;"></div>
<div style="left:635.60px;top:237.80px;width:49.40px;height:21.50px;background:#d2d2d2;border:0.8px solid #8a8a8a;border-top:0;box-sizing:border-box;border-radius:0 0 1.5px 1.5px;"></div>
<div style="left:635.60px;top:237.80px;width:49.40px;height:21.50px;overflow:hidden;">
<span style="left:3.0px;top:1.60px;font-size:5.2px;line-height:6.2px;color:#1a1a1a;font-weight:400;">tQSL</span>
<span style="left:3.0px;top:8.60px;font-size:5.2px;line-height:6.2px;color:#1a1a1a;font-weight:400;">μ': 1.230 ns</span>
<span style="left:3.0px;top:14.40px;font-size:5.2px;line-height:6.2px;color:#1a1a1a;font-weight:700;">Low amplitude</span>
</div>
<div style="left:635.60px;top:261.70px;width:49.40px;height:5.60px;background:#5c5c5c;"></div>
<span style="left:637.80px;top:261.30px;font-size:5.0px;line-height:6.00px;color:#cfcfcf;font-weight:700;">Meas 19</span>
<div style="left:677.80px;top:263.00px;width:5.60px;height:3.10px;background:#3f7fd0;border-radius:1.4px;"></div>
<div style="left:635.60px;top:267.30px;width:49.40px;height:15.10px;background:#d2d2d2;border:0.8px solid #8a8a8a;border-top:0;box-sizing:border-box;border-radius:0 0 1.5px 1.5px;"></div>
<div style="left:635.60px;top:267.30px;width:49.40px;height:15.10px;overflow:hidden;">
<span style="left:3.0px;top:1.60px;font-size:5.2px;line-height:6.2px;color:#1a1a1a;font-weight:400;">tRPRE</span>
<span style="left:3.0px;top:8.60px;font-size:5.2px;line-height:6.2px;color:#1a1a1a;font-weight:400;">μ': 14.91 tCK(avg)</span>
</div>
<div style="left:635.60px;top:284.40px;width:49.40px;height:5.20px;background:#5c5c5c;"></div>
<span style="left:637.80px;top:283.80px;font-size:5.0px;line-height:6.00px;color:#cfcfcf;font-weight:700;">Meas 20</span>
<div style="left:677.80px;top:285.70px;width:5.60px;height:2.70px;background:#3f7fd0;border-radius:1.4px;"></div>
<div style="left:635.60px;top:289.60px;width:49.40px;height:15.00px;background:#d2d2d2;border:0.8px solid #8a8a8a;border-top:0;box-sizing:border-box;border-radius:0 0 1.5px 1.5px;"></div>
<div style="left:635.60px;top:289.60px;width:49.40px;height:15.00px;overflow:hidden;">
<span style="left:3.0px;top:1.60px;font-size:5.2px;line-height:6.2px;color:#1a1a1a;font-weight:400;">tRPST</span>
<span style="left:3.0px;top:8.60px;font-size:5.2px;line-height:6.2px;color:#1a1a1a;font-weight:400;">μ': 16.76 tCK(avg)</span>
</div>
<div style="left:635.60px;top:307.00px;width:49.40px;height:5.50px;background:#5c5c5c;"></div>
<span style="left:637.80px;top:306.55px;font-size:5.0px;line-height:6.00px;color:#cfcfcf;font-weight:700;">Meas 21</span>
<div style="left:677.80px;top:308.30px;width:5.60px;height:3.00px;background:#3f7fd0;border-radius:1.4px;"></div>
<div style="left:635.60px;top:312.50px;width:49.40px;height:14.60px;background:#d2d2d2;border:0.8px solid #8a8a8a;border-top:0;box-sizing:border-box;border-radius:0 0 1.5px 1.5px;"></div>
<div style="left:635.60px;top:312.50px;width:49.40px;height:14.60px;overflow:hidden;">
<span style="left:3.0px;top:1.60px;font-size:5.2px;line-height:6.2px;color:#1a1a1a;font-weight:400;">SRQdiff-Fall(DQS)</span>
<span style="left:3.0px;top:8.60px;font-size:5.2px;line-height:6.2px;color:#1a1a1a;font-weight:400;">μ': -9.957 V/ns</span>
</div>
<div style="left:635.60px;top:329.50px;width:49.40px;height:5.20px;background:#5c5c5c;"></div>
<span style="left:637.80px;top:328.90px;font-size:5.0px;line-height:6.00px;color:#cfcfcf;font-weight:700;">Meas 22</span>
<div style="left:677.80px;top:330.80px;width:5.60px;height:2.70px;background:#3f7fd0;border-radius:1.4px;"></div>
<div style="left:635.60px;top:334.70px;width:49.40px;height:15.40px;background:#d2d2d2;border:0.8px solid #8a8a8a;border-top:0;box-sizing:border-box;border-radius:0 0 1.5px 1.5px;"></div>
<div style="left:635.60px;top:334.70px;width:49.40px;height:15.40px;overflow:hidden;">
<span style="left:3.0px;top:1.60px;font-size:5.2px;line-height:6.2px;color:#1a1a1a;font-weight:400;">SRQdiff-Rise(DQS)</span>
<span style="left:3.0px;top:8.60px;font-size:5.2px;line-height:6.2px;color:#1a1a1a;font-weight:400;">μ': 11.42 V/ns</span>
</div>
<div style="left:635.60px;top:352.60px;width:49.40px;height:5.40px;background:#0c0c0c;"></div>
<span style="left:637.80px;top:352.10px;font-size:5.0px;line-height:6.00px;color:#f2f2f2;font-weight:700;">Search 1</span>
<div style="left:672.40px;top:353.90px;width:11.00px;height:2.90px;background:#3f7fd0;border-radius:1.4px;"></div>
<div style="left:635.60px;top:358.00px;width:49.40px;height:15.60px;background:#d2d2d2;border:0.8px solid #8a8a8a;border-top:0;box-sizing:border-box;border-radius:0 0 1.5px 1.5px;"></div>
<div style="left:635.60px;top:358.00px;width:49.40px;height:15.60px;overflow:hidden;">
<span style="left:3.0px;top:1.60px;font-size:5.2px;line-height:6.2px;color:#1a1a1a;font-weight:400;">Search: DDR R...</span>
<span style="left:3.0px;top:8.60px;font-size:5.2px;line-height:6.2px;color:#1a1a1a;font-weight:400;">Events: 158</span>
</div>
<svg width="700" height="430" viewBox="0 0 700 430"><path d="M678.4 360.6h4.4l-2.2 3.4z" fill="#e05ac0"/></svg>
<div style="left:636.60px;top:375.40px;width:47.40px;height:9.00px;background:#2a2a2a;"></div>
<svg width="700" height="430" viewBox="0 0 700 430"><path d="M657.4 378.0l3.2 3.4 3.2-3.4" fill="none" stroke="#f0f0f0" stroke-width="1.3"/></svg>
<div style="left:652.00px;top:387.40px;width:31.20px;height:12.30px;background:#f2202e;border-radius:1.6px;"></div>
<span style="left:567.70px;width:200px;text-align:center;top:390.48px;font-size:5.2px;line-height:6.24px;color:#ffffff;font-weight:700;">Preview</span>
<div style="left:645.60px;top:385.40px;width:0.80px;height:29.80px;background:#3c3c3c;"></div>
<div style="left:17.60px;top:219.00px;width:611.70px;height:8.60px;background:#282828;"></div>
<span style="left:23.00px;top:219.96px;font-size:5.4px;line-height:6.48px;color:#f0f0f0;font-weight:700;">Waveform View</span>
<div style="left:18.60px;top:227.60px;width:608.60px;height:157.20px;background:#000000;"></div>
<div style="left:627.20px;top:219.00px;width:2.10px;height:166.20px;background:#3a3a3a;"></div>
<div style="left:17.60px;top:219.00px;width:1.00px;height:166.20px;background:#3a3a3a;"></div>
<svg width="700" height="430" viewBox="0 0 700 430">
<rect x="221.5" y="224.6" width="202.5" height="1.1" fill="#9a9a9a"/>
<rect x="320.8" y="218.8" width="3.8" height="7.4" rx="0.8" fill="#e89020"/><path d="M319.4 232.4l1.6-2h3.6l1.6 2v4.6l-3.4 2.8-3.4-2.8z" fill="#141008" stroke="#e89020" stroke-width="0.9"/><path d="M321.4 232.6h2.8M322.8 232.6v3.4" stroke="#e89020" stroke-width="0.8" fill="none"/>
<rect x="18.6" y="278.8" width="608.6" height="1.2" fill="#303030"/><rect x="18.6" y="331.9" width="608.6" height="1.2" fill="#303030"/>
<line x1="79.46" y1="228" x2="79.46" y2="384.8" stroke="#505050" stroke-width="0.7" stroke-dasharray="0.7 1.9" opacity="0.7"/>
<line x1="140.32" y1="228" x2="140.32" y2="384.8" stroke="#505050" stroke-width="0.7" stroke-dasharray="0.7 1.9" opacity="0.7"/>
<line x1="201.18" y1="228" x2="201.18" y2="384.8" stroke="#505050" stroke-width="0.7" stroke-dasharray="0.7 1.9" opacity="0.7"/>
<line x1="262.04" y1="228" x2="262.04" y2="384.8" stroke="#505050" stroke-width="0.7" stroke-dasharray="0.7 1.9" opacity="0.7"/>
<line x1="322.90" y1="228" x2="322.90" y2="384.8" stroke="#505050" stroke-width="0.7" stroke-dasharray="0.7 1.9" opacity="0.7"/>
<line x1="383.76" y1="228" x2="383.76" y2="384.8" stroke="#505050" stroke-width="0.7" stroke-dasharray="0.7 1.9" opacity="0.7"/>
<line x1="444.62" y1="228" x2="444.62" y2="384.8" stroke="#505050" stroke-width="0.7" stroke-dasharray="0.7 1.9" opacity="0.7"/>
<line x1="505.48" y1="228" x2="505.48" y2="384.8" stroke="#505050" stroke-width="0.7" stroke-dasharray="0.7 1.9" opacity="0.7"/>
<line x1="566.34" y1="228" x2="566.34" y2="384.8" stroke="#505050" stroke-width="0.7" stroke-dasharray="0.7 1.9" opacity="0.7"/>
<line x1="322.90" y1="228" x2="322.90" y2="384.8" stroke="#2c2c2c" stroke-width="0.7"/>
<line x1="18.6" y1="232.78" x2="627.2" y2="232.78" stroke="#424242" stroke-width="0.8" stroke-dasharray="0.8 11.37"/>
<line x1="18.6" y1="237.96" x2="627.2" y2="237.96" stroke="#424242" stroke-width="0.8" stroke-dasharray="0.8 11.37"/>
<line x1="18.6" y1="243.14" x2="627.2" y2="243.14" stroke="#424242" stroke-width="0.8" stroke-dasharray="0.8 11.37"/>
<line x1="18.6" y1="248.32" x2="627.2" y2="248.32" stroke="#424242" stroke-width="0.8" stroke-dasharray="0.8 11.37"/>
<line x1="18.6" y1="253.50" x2="627.2" y2="253.50" stroke="#424242" stroke-width="0.8" stroke-dasharray="0.8 11.37"/>
<line x1="18.6" y1="258.68" x2="627.2" y2="258.68" stroke="#424242" stroke-width="0.8" stroke-dasharray="0.8 11.37"/>
<line x1="18.6" y1="263.86" x2="627.2" y2="263.86" stroke="#424242" stroke-width="0.8" stroke-dasharray="0.8 11.37"/>
<line x1="18.6" y1="269.04" x2="627.2" y2="269.04" stroke="#424242" stroke-width="0.8" stroke-dasharray="0.8 11.37"/>
<line x1="18.6" y1="274.22" x2="627.2" y2="274.22" stroke="#424242" stroke-width="0.8" stroke-dasharray="0.8 11.37"/>
<line x1="18.6" y1="284.71" x2="627.2" y2="284.71" stroke="#424242" stroke-width="0.8" stroke-dasharray="0.8 11.37"/>
<line x1="18.6" y1="290.02" x2="627.2" y2="290.02" stroke="#424242" stroke-width="0.8" stroke-dasharray="0.8 11.37"/>
<line x1="18.6" y1="295.33" x2="627.2" y2="295.33" stroke="#424242" stroke-width="0.8" stroke-dasharray="0.8 11.37"/>
<line x1="18.6" y1="300.64" x2="627.2" y2="300.64" stroke="#424242" stroke-width="0.8" stroke-dasharray="0.8 11.37"/>
<line x1="18.6" y1="305.95" x2="627.2" y2="305.95" stroke="#424242" stroke-width="0.8" stroke-dasharray="0.8 11.37"/>
<line x1="18.6" y1="311.26" x2="627.2" y2="311.26" stroke="#424242" stroke-width="0.8" stroke-dasharray="0.8 11.37"/>
<line x1="18.6" y1="316.57" x2="627.2" y2="316.57" stroke="#424242" stroke-width="0.8" stroke-dasharray="0.8 11.37"/>
<line x1="18.6" y1="321.88" x2="627.2" y2="321.88" stroke="#424242" stroke-width="0.8" stroke-dasharray="0.8 11.37"/>
<line x1="18.6" y1="327.19" x2="627.2" y2="327.19" stroke="#424242" stroke-width="0.8" stroke-dasharray="0.8 11.37"/>
<line x1="18.6" y1="337.73" x2="627.2" y2="337.73" stroke="#424242" stroke-width="0.8" stroke-dasharray="0.8 11.37"/>
<line x1="18.6" y1="342.96" x2="627.2" y2="342.96" stroke="#424242" stroke-width="0.8" stroke-dasharray="0.8 11.37"/>
<line x1="18.6" y1="348.19" x2="627.2" y2="348.19" stroke="#424242" stroke-width="0.8" stroke-dasharray="0.8 11.37"/>
<line x1="18.6" y1="353.42" x2="627.2" y2="353.42" stroke="#424242" stroke-width="0.8" stroke-dasharray="0.8 11.37"/>
<line x1="18.6" y1="358.65" x2="627.2" y2="358.65" stroke="#424242" stroke-width="0.8" stroke-dasharray="0.8 11.37"/>
<line x1="18.6" y1="363.88" x2="627.2" y2="363.88" stroke="#424242" stroke-width="0.8" stroke-dasharray="0.8 11.37"/>
<line x1="18.6" y1="369.11" x2="627.2" y2="369.11" stroke="#424242" stroke-width="0.8" stroke-dasharray="0.8 11.37"/>
<line x1="18.6" y1="374.34" x2="627.2" y2="374.34" stroke="#424242" stroke-width="0.8" stroke-dasharray="0.8 11.37"/>
<line x1="18.6" y1="379.57" x2="627.2" y2="379.57" stroke="#424242" stroke-width="0.8" stroke-dasharray="0.8 11.37"/>
<path d="M131.4 228.6H167.0" stroke="#ea8fcc" stroke-width="1.7" fill="none"/>
<path d="M131.2 228.2h4.2l-2.1 3.4z M167.2 228.2h-4.2l2.1 3.4z" fill="#ea8fcc"/>
<path d="M306.4 228.6H342.0" stroke="#ea8fcc" stroke-width="1.7" fill="none"/>
<path d="M306.2 228.2h4.2l-2.1 3.4z M342.2 228.2h-4.2l2.1 3.4z" fill="#ea8fcc"/>
<path d="M481.4 228.6H517.0" stroke="#ea8fcc" stroke-width="1.7" fill="none"/>
<path d="M481.2 228.2h4.2l-2.1 3.4z M517.2 228.2h-4.2l2.1 3.4z" fill="#ea8fcc"/>
<clipPath id="wc"><rect x="18.6" y="227.6" width="608.6" height="157.2"/></clipPath><g clip-path="url(#wc)">
<path d="M18.6 245.0 L20.4 245.0 L21.0 262.8 L24.6 262.8 L25.2 246.5 L25.8 262.8 L36.8 262.8 L37.6 245.0 L38.8 245.0 L39.4 250.0 L40.6 252.6 L134.6 257.0 L135.4 273.8 L142.3 273.8 L142.9 236.0 L148.4 236.0 L149.2 273.8 L150.6 273.8 L151.0 236.0 L152.2 236.0 L152.6 273.8 L154.4 273.8 L155.0 236.0 L156.6 236.0 L157.4 273.8 L158.4 273.8 L159.0 236.0 L160.6 236.0 L161.3 273.8 L162.6 273.8 L163.2 236.0 L176.4 236.0 L177.6 250.6 L183.2 254.2 L183.9 244.4 L185.0 244.4 L185.4 263.4 L188.0 263.4 L188.8 244.4 L192.3 244.4 L194.6 263.4 L195.4 263.4 L195.9 244.4 L197.0 244.4 L197.6 263.4 L199.6 263.4 L200.2 244.4 L205.4 244.4 L205.7 263.4 L206.0 244.4 L207.6 244.4 L207.9 263.4 L208.2 244.4 L211.6 244.4 L212.2 263.4 L213.2 263.4 L213.7 257.0 L215.0 254.2 L218.0 253.4 L309.6 257.0 L310.2 236.0 L320.0 236.0 L320.4 273.8 L323.2 273.8 L323.8 236.0 L325.0 236.0 L325.6 273.8 L327.4 273.8 L328.0 236.0 L329.0 236.0 L329.6 273.8 L333.0 273.8 L333.6 236.0 L336.6 236.0 L337.0 273.8 L338.6 273.8 L339.2 236.0 L351.4 236.0 L352.6 250.6 L358.2 254.2 L358.9 244.4 L360.0 244.4 L360.4 263.4 L363.0 263.4 L363.8 244.4 L367.3 244.4 L369.6 263.4 L370.4 263.4 L370.9 244.4 L372.0 244.4 L372.6 263.4 L374.6 263.4 L375.2 244.4 L380.4 244.4 L380.7 263.4 L381.0 244.4 L382.6 244.4 L382.9 263.4 L383.2 244.4 L386.6 244.4 L387.2 263.4 L388.2 263.4 L388.7 257.0 L390.0 254.2 L393.0 253.4 L484.0 257.0 L484.8 273.8 L489.6 273.8 L490.2 236.0 L495.4 236.0 L496.0 273.8 L498.0 273.8 L498.6 236.0 L500.6 236.0 L501.2 273.8 L502.4 273.8 L503.0 236.0 L504.8 236.0 L505.4 273.8 L507.4 273.8 L508.0 236.0 L510.4 236.0 L511.0 273.8 L513.0 273.8 L526.4 273.8 L527.6 250.6 L533.2 254.2 L533.9 244.4 L535.0 244.4 L535.4 263.4 L538.0 263.4 L538.8 244.4 L542.3 244.4 L544.6 263.4 L545.4 263.4 L545.9 244.4 L547.0 244.4 L547.6 263.4 L549.6 263.4 L550.2 244.4 L555.4 244.4 L555.7 263.4 L556.0 244.4 L557.6 244.4 L557.9 263.4 L558.2 244.4 L561.6 244.4 L562.2 263.4 L563.2 263.4 L563.7 257.0 L565.0 254.2 L568.0 253.4 L659.6 257.0 L660.4 273.8 L697.0 273.8 L702.6 250.6 L708.2 254.2 L708.9 244.4 L710.0 244.4 L710.4 263.4 L713.0 263.4 L713.8 244.4 L717.3 244.4 L719.6 263.4 L720.4 263.4 L720.9 244.4 L722.0 244.4 L722.6 263.4 L724.6 263.4 L725.2 244.4 L730.4 244.4 L730.7 263.4 L731.0 244.4 L732.6 244.4 L732.9 263.4 L733.2 244.4 L736.6 244.4 L737.2 263.4 L738.2 263.4 L738.7 257.0 L740.0 254.2 L743.0 253.4" fill="none" stroke="#bdbdbd" stroke-width="0.9" stroke-linejoin="round" opacity="0.5"/>
<path d="M18.6 245.0L20.4 245.0M21.0 262.8L24.6 262.8M25.8 262.8L36.8 262.8M37.6 245.0L38.8 245.0M39.4 250.0L40.6 252.6M40.6 252.6L134.6 257.0M135.4 273.8L142.3 273.8M142.9 236.0L148.4 236.0M149.2 273.8L150.6 273.8M151.0 236.0L152.2 236.0M152.6 273.8L154.4 273.8M155.0 236.0L156.6 236.0M159.0 236.0L160.6 236.0M161.3 273.8L162.6 273.8M163.2 236.0L176.4 236.0M177.6 250.6L183.2 254.2M183.9 244.4L185.0 244.4M185.4 263.4L188.0 263.4M188.8 244.4L192.3 244.4M195.9 244.4L197.0 244.4M197.6 263.4L199.6 263.4M200.2 244.4L205.4 244.4M206.0 244.4L207.6 244.4M208.2 244.4L211.6 244.4M213.7 257.0L215.0 254.2M215.0 254.2L218.0 253.4M218.0 253.4L309.6 257.0M310.2 236.0L320.0 236.0M320.4 273.8L323.2 273.8M323.8 236.0L325.0 236.0M325.6 273.8L327.4 273.8M329.6 273.8L333.0 273.8M333.6 236.0L336.6 236.0M337.0 273.8L338.6 273.8M339.2 236.0L351.4 236.0M352.6 250.6L358.2 254.2M358.9 244.4L360.0 244.4M360.4 263.4L363.0 263.4M363.8 244.4L367.3 244.4M370.9 244.4L372.0 244.4M372.6 263.4L374.6 263.4M375.2 244.4L380.4 244.4M381.0 244.4L382.6 244.4M383.2 244.4L386.6 244.4M388.7 257.0L390.0 254.2M390.0 254.2L393.0 253.4M393.0 253.4L484.0 257.0M484.8 273.8L489.6 273.8M490.2 236.0L495.4 236.0M496.0 273.8L498.0 273.8M498.6 236.0L500.6 236.0M501.2 273.8L502.4 273.8M503.0 236.0L504.8 236.0M505.4 273.8L507.4 273.8M508.0 236.0L510.4 236.0M511.0 273.8L513.0 273.8M513.0 273.8L526.4 273.8M527.6 250.6L533.2 254.2M533.9 244.4L535.0 244.4M535.4 263.4L538.0 263.4M538.8 244.4L542.3 244.4M545.9 244.4L547.0 244.4M547.6 263.4L549.6 263.4M550.2 244.4L555.4 244.4M556.0 244.4L557.6 244.4M558.2 244.4L561.6 244.4M563.7 257.0L565.0 254.2M565.0 254.2L568.0 253.4M568.0 253.4L659.6 257.0M660.4 273.8L697.0 273.8M702.6 250.6L708.2 254.2M708.9 244.4L710.0 244.4M710.4 263.4L713.0 263.4M713.8 244.4L717.3 244.4M720.9 244.4L722.0 244.4M722.6 263.4L724.6 263.4M725.2 244.4L730.4 244.4M731.0 244.4L732.6 244.4M733.2 244.4L736.6 244.4M738.7 257.0L740.0 254.2M740.0 254.2L743.0 253.4" fill="none" stroke="#e2e2e2" stroke-width="1.0" stroke-linecap="round" opacity="0.85"/>
<path d="M18.6 274.1H627.2" stroke="#8a8a8a" stroke-width="0.9" stroke-dasharray="0.9 1.53" fill="none" opacity="0.8"/>
<path d="M18.6 306.1H627.2" stroke="#8a8a8a" stroke-width="0.9" stroke-dasharray="0.9 1.53" fill="none" opacity="0.75"/>
<path d="M131.2 306.1L131.8 326.2H133.2M164.0 320L164.6 325.8H176.4L177.4 323L179.8 306.1" stroke="#6f88c8" stroke-width="0.9" fill="none" opacity="0.8"/>
<path d="M306.2 306.1L306.8 326.2H308.2M339.0 320L339.6 325.8H351.4L352.4 323L354.8 306.1" stroke="#6f88c8" stroke-width="0.9" fill="none" opacity="0.8"/>
<path d="M481.2 306.1L481.8 326.2H483.2M514.0 320L514.6 325.8H526.4L527.4 323L529.8 306.1" stroke="#6f88c8" stroke-width="0.9" fill="none" opacity="0.8"/>
<path d="M656.2 306.1L656.8 326.2H658.2M689.0 320L689.6 325.8H701.4L702.4 323L704.8 306.1" stroke="#6f88c8" stroke-width="0.9" fill="none" opacity="0.8"/>
<path d="M39.6 306.1H131.2" stroke="#8aa2e6" stroke-width="1.0" stroke-dasharray="2.4 0.7" fill="none" opacity="0.9"/>
<path d="M213.6 306.1H306.2" stroke="#8aa2e6" stroke-width="1.0" stroke-dasharray="2.4 0.7" fill="none" opacity="0.9"/>
<path d="M388.6 306.1H481.2" stroke="#8aa2e6" stroke-width="1.0" stroke-dasharray="2.4 0.7" fill="none" opacity="0.9"/>
<path d="M563.6 306.1H656.2" stroke="#8aa2e6" stroke-width="1.0" stroke-dasharray="2.4 0.7" fill="none" opacity="0.9"/>
<path d="M138.25 283.4L139.02 326.4M139.02 326.4H140.00M140.00 326.4L140.77 283.4M140.77 283.4H141.75M141.75 283.4L142.52 326.4M142.52 326.4H143.50M145.25 283.4L146.02 326.4M146.02 326.4H147.00M148.75 283.4L149.52 326.4M149.52 326.4H150.50M150.50 326.4L151.27 283.4M151.27 283.4H152.25M155.75 283.4L156.52 326.4M156.52 326.4H157.50M159.25 283.4L160.02 326.4M160.02 326.4H161.00M162.75 283.4L163.52 326.4M163.52 326.4H164.50" stroke="#aab8e0" stroke-width="0.85" fill="none" opacity="0.75"/>
<path d="M134.75 283.4L135.52 326.4M135.52 326.4H136.50M147.00 326.4L147.77 283.4M147.77 283.4H148.75M157.50 326.4L158.27 283.4M158.27 283.4H159.25" stroke="#8090c0" stroke-width="0.85" fill="none" opacity="0.6"/>
<path d="M133.00 326.4L133.77 283.4M133.77 283.4H134.75M143.50 326.4L144.27 283.4M144.27 283.4H145.25" stroke="#5d6c9c" stroke-width="0.85" fill="none" opacity="0.5"/>
<path d="M136.50 326.4L137.27 283.4M137.27 283.4H138.25M152.25 283.4L153.02 326.4M153.02 326.4H154.00M154.00 326.4L154.77 283.4M154.77 283.4H155.75M161.00 326.4L161.77 283.4M161.77 283.4H162.75" stroke="#465580" stroke-width="0.85" fill="none" opacity="0.45"/>
<path d="M308.00 326.4L308.77 283.4M308.77 283.4H309.75M311.50 326.4L312.27 283.4M312.27 283.4H313.25M315.00 326.4L315.77 283.4M315.77 283.4H316.75M318.50 326.4L319.27 283.4M319.27 283.4H320.25M327.25 283.4L328.02 326.4M328.02 326.4H329.00M332.50 326.4L333.27 283.4M333.27 283.4H334.25M337.75 283.4L338.52 326.4M338.52 326.4H339.50" stroke="#aab8e0" stroke-width="0.85" fill="none" opacity="0.75"/>
<path d="M309.75 283.4L310.52 326.4M310.52 326.4H311.50M316.75 283.4L317.52 326.4M317.52 326.4H318.50M320.25 283.4L321.02 326.4M321.02 326.4H322.00M325.50 326.4L326.27 283.4M326.27 283.4H327.25M330.75 283.4L331.52 326.4M331.52 326.4H332.50M334.25 283.4L335.02 326.4M335.02 326.4H336.00" stroke="#8090c0" stroke-width="0.85" fill="none" opacity="0.6"/>
<path d="M322.00 326.4L322.77 283.4M322.77 283.4H323.75M329.00 326.4L329.77 283.4M329.77 283.4H330.75M336.00 326.4L336.77 283.4M336.77 283.4H337.75" stroke="#5d6c9c" stroke-width="0.85" fill="none" opacity="0.5"/>
<path d="M313.25 283.4L314.02 326.4M314.02 326.4H315.00M323.75 283.4L324.52 326.4M324.52 326.4H325.50" stroke="#465580" stroke-width="0.85" fill="none" opacity="0.45"/>
<path d="M483.00 326.4L483.77 283.4M483.77 283.4H484.75M484.75 283.4L485.52 326.4M485.52 326.4H486.50M505.75 283.4L506.52 326.4M506.52 326.4H507.50" stroke="#aab8e0" stroke-width="0.85" fill="none" opacity="0.75"/>
<path d="M486.50 326.4L487.27 283.4M487.27 283.4H488.25M500.50 326.4L501.27 283.4M501.27 283.4H502.25M502.25 283.4L503.02 326.4M503.02 326.4H504.00M504.00 326.4L504.77 283.4M504.77 283.4H505.75" stroke="#8090c0" stroke-width="0.85" fill="none" opacity="0.6"/>
<path d="M491.75 283.4L492.52 326.4M492.52 326.4H493.50M497.00 326.4L497.77 283.4M497.77 283.4H498.75M498.75 283.4L499.52 326.4M499.52 326.4H500.50M507.50 326.4L508.27 283.4M508.27 283.4H509.25M511.00 326.4L511.77 283.4M511.77 283.4H512.75" stroke="#5d6c9c" stroke-width="0.85" fill="none" opacity="0.5"/>
<path d="M488.25 283.4L489.02 326.4M489.02 326.4H490.00M490.00 326.4L490.77 283.4M490.77 283.4H491.75M493.50 326.4L494.27 283.4M494.27 283.4H495.25M495.25 283.4L496.02 326.4M496.02 326.4H497.00M509.25 283.4L510.02 326.4M510.02 326.4H511.00M512.75 283.4L513.52 326.4M513.52 326.4H514.50" stroke="#465580" stroke-width="0.85" fill="none" opacity="0.45"/>
<path d="M659.75 283.4L660.52 326.4M660.52 326.4H661.50M661.50 326.4L662.27 283.4M662.27 283.4H663.25M673.75 283.4L674.52 326.4M674.52 326.4H675.50M675.50 326.4L676.27 283.4M676.27 283.4H677.25M686.00 326.4L686.77 283.4M686.77 283.4H687.75M687.75 283.4L688.52 326.4M688.52 326.4H689.50" stroke="#aab8e0" stroke-width="0.85" fill="none" opacity="0.75"/>
<path d="M665.00 326.4L665.77 283.4M665.77 283.4H666.75M668.50 326.4L669.27 283.4M669.27 283.4H670.25" stroke="#8090c0" stroke-width="0.85" fill="none" opacity="0.6"/>
<path d="M658.00 326.4L658.77 283.4M658.77 283.4H659.75M666.75 283.4L667.52 326.4M667.52 326.4H668.50M677.25 283.4L678.02 326.4M678.02 326.4H679.00M679.00 326.4L679.77 283.4M679.77 283.4H680.75M680.75 283.4L681.52 326.4M681.52 326.4H682.50" stroke="#5d6c9c" stroke-width="0.85" fill="none" opacity="0.5"/>
<path d="M663.25 283.4L664.02 326.4M664.02 326.4H665.00M670.25 283.4L671.02 326.4M671.02 326.4H672.00M672.00 326.4L672.77 283.4M672.77 283.4H673.75M682.50 326.4L683.27 283.4M683.27 283.4H684.25M684.25 283.4L685.02 326.4M685.02 326.4H686.00" stroke="#465580" stroke-width="0.85" fill="none" opacity="0.45"/>
<path d="M24.20 316.8L24.79 293.2M24.79 293.2H25.55M25.55 293.2L26.14 316.8M26.14 316.8H26.90" stroke="#6c84c4" stroke-width="0.8" fill="none" opacity="0.6"/>
<path d="M18.80 316.8L19.39 293.2M19.39 293.2H20.15M20.15 293.2L20.74 316.8M20.74 316.8H21.50M29.60 316.8L30.19 293.2M30.19 293.2H30.95M35.00 316.8L35.59 293.2M35.59 293.2H36.35M36.35 293.2L36.94 316.8M36.94 316.8H37.70M39.05 293.2L39.64 316.8M39.64 316.8H40.40" stroke="#4c62a0" stroke-width="0.8" fill="none" opacity="0.5"/>
<path d="M21.50 316.8L22.09 293.2M22.09 293.2H22.85M22.85 293.2L23.44 316.8M23.44 316.8H24.20M26.90 316.8L27.49 293.2M27.49 293.2H28.25M28.25 293.2L28.84 316.8M28.84 316.8H29.60M30.95 293.2L31.54 316.8M31.54 316.8H32.30M32.30 316.8L32.89 293.2M32.89 293.2H33.65M33.65 293.2L34.24 316.8M34.24 316.8H35.00M37.70 316.8L38.29 293.2M38.29 293.2H39.05" stroke="#3c4e84" stroke-width="0.8" fill="none" opacity="0.42"/>
<path d="M18.8 293.2H39.2M18.8 316.8H39.2" stroke="#6a84c8" stroke-width="0.9" stroke-dasharray="1 1.3" fill="none" opacity="0.65"/>
<path d="M182.90 316.8L183.49 293.2M183.49 293.2H184.25M186.95 293.2L187.54 316.8M187.54 316.8H188.30M189.65 293.2L190.24 316.8M190.24 316.8H191.00M192.35 293.2L192.94 316.8M192.94 316.8H193.70M193.70 316.8L194.29 293.2M194.29 293.2H195.05M196.40 316.8L196.99 293.2M196.99 293.2H197.75M199.10 316.8L199.69 293.2M199.69 293.2H200.45M204.50 316.8L205.09 293.2M205.09 293.2H205.85M205.85 293.2L206.44 316.8M206.44 316.8H207.20M212.60 316.8L213.19 293.2M213.19 293.2H213.95" stroke="#6c84c4" stroke-width="0.8" fill="none" opacity="0.6"/>
<path d="M181.55 293.2L182.14 316.8M182.14 316.8H182.90M184.25 293.2L184.84 316.8M184.84 316.8H185.60M185.60 316.8L186.19 293.2M186.19 293.2H186.95M191.00 316.8L191.59 293.2M191.59 293.2H192.35M195.05 293.2L195.64 316.8M195.64 316.8H196.40M200.45 293.2L201.04 316.8M201.04 316.8H201.80M201.80 316.8L202.39 293.2M202.39 293.2H203.15M203.15 293.2L203.74 316.8M203.74 316.8H204.50M207.20 316.8L207.79 293.2M207.79 293.2H208.55M208.55 293.2L209.14 316.8M209.14 316.8H209.90M211.25 293.2L211.84 316.8M211.84 316.8H212.60" stroke="#4c62a0" stroke-width="0.8" fill="none" opacity="0.5"/>
<path d="M180.20 316.8L180.79 293.2M180.79 293.2H181.55M188.30 316.8L188.89 293.2M188.89 293.2H189.65M197.75 293.2L198.34 316.8M198.34 316.8H199.10M209.90 316.8L210.49 293.2M210.49 293.2H211.25" stroke="#3c4e84" stroke-width="0.8" fill="none" opacity="0.42"/>
<path d="M180.2 293.2H213.2M180.2 316.8H213.2" stroke="#6a84c8" stroke-width="0.9" stroke-dasharray="1 1.3" fill="none" opacity="0.65"/>
<path d="M366.00 316.8L366.59 293.2M366.59 293.2H367.35M367.35 293.2L367.94 316.8M367.94 316.8H368.70M368.70 316.8L369.29 293.2M369.29 293.2H370.05M370.05 293.2L370.64 316.8M370.64 316.8H371.40M371.40 316.8L371.99 293.2M371.99 293.2H372.75M372.75 293.2L373.34 316.8M373.34 316.8H374.10M375.45 293.2L376.04 316.8M376.04 316.8H376.80M376.80 316.8L377.39 293.2M377.39 293.2H378.15M380.85 293.2L381.44 316.8M381.44 316.8H382.20M384.90 316.8L385.49 293.2M385.49 293.2H386.25M386.25 293.2L386.84 316.8M386.84 316.8H387.60" stroke="#6c84c4" stroke-width="0.8" fill="none" opacity="0.6"/>
<path d="M355.20 316.8L355.79 293.2M355.79 293.2H356.55M357.90 316.8L358.49 293.2M358.49 293.2H359.25M360.60 316.8L361.19 293.2M361.19 293.2H361.95M361.95 293.2L362.54 316.8M362.54 316.8H363.30M364.65 293.2L365.24 316.8M365.24 316.8H366.00M378.15 293.2L378.74 316.8M378.74 316.8H379.50M382.20 316.8L382.79 293.2M382.79 293.2H383.55M383.55 293.2L384.14 316.8M384.14 316.8H384.90M387.60 316.8L388.19 293.2M388.19 293.2H388.95" stroke="#4c62a0" stroke-width="0.8" fill="none" opacity="0.5"/>
<path d="M356.55 293.2L357.14 316.8M357.14 316.8H357.90M359.25 293.2L359.84 316.8M359.84 316.8H360.60M363.30 316.8L363.89 293.2M363.89 293.2H364.65M374.10 316.8L374.69 293.2M374.69 293.2H375.45M379.50 316.8L380.09 293.2M380.09 293.2H380.85" stroke="#3c4e84" stroke-width="0.8" fill="none" opacity="0.42"/>
<path d="M355.2 293.2H388.2M355.2 316.8H388.2" stroke="#6a84c8" stroke-width="0.9" stroke-dasharray="1 1.3" fill="none" opacity="0.65"/>
<path d="M536.95 293.2L537.54 316.8M537.54 316.8H538.30M546.40 316.8L546.99 293.2M546.99 293.2H547.75M557.20 316.8L557.79 293.2M557.79 293.2H558.55M562.60 316.8L563.19 293.2M563.19 293.2H563.95" stroke="#6c84c4" stroke-width="0.8" fill="none" opacity="0.6"/>
<path d="M531.55 293.2L532.14 316.8M532.14 316.8H532.90M535.60 316.8L536.19 293.2M536.19 293.2H536.95M547.75 293.2L548.34 316.8M548.34 316.8H549.10M551.80 316.8L552.39 293.2M552.39 293.2H553.15M553.15 293.2L553.74 316.8M553.74 316.8H554.50M554.50 316.8L555.09 293.2M555.09 293.2H555.85M555.85 293.2L556.44 316.8M556.44 316.8H557.20M558.55 293.2L559.14 316.8M559.14 316.8H559.90M561.25 293.2L561.84 316.8M561.84 316.8H562.60" stroke="#4c62a0" stroke-width="0.8" fill="none" opacity="0.5"/>
<path d="M530.20 316.8L530.79 293.2M530.79 293.2H531.55M532.90 316.8L533.49 293.2M533.49 293.2H534.25M534.25 293.2L534.84 316.8M534.84 316.8H535.60M538.30 316.8L538.89 293.2M538.89 293.2H539.65M539.65 293.2L540.24 316.8M540.24 316.8H541.00M541.00 316.8L541.59 293.2M541.59 293.2H542.35M542.35 293.2L542.94 316.8M542.94 316.8H543.70M543.70 316.8L544.29 293.2M544.29 293.2H545.05M545.05 293.2L545.64 316.8M545.64 316.8H546.40M549.10 316.8L549.69 293.2M549.69 293.2H550.45M550.45 293.2L551.04 316.8M551.04 316.8H551.80M559.90 316.8L560.49 293.2M560.49 293.2H561.25" stroke="#3c4e84" stroke-width="0.8" fill="none" opacity="0.42"/>
<path d="M530.2 293.2H563.2M530.2 316.8H563.2" stroke="#6a84c8" stroke-width="0.9" stroke-dasharray="1 1.3" fill="none" opacity="0.65"/>
<path d="M705.20 316.8L705.79 293.2M705.79 293.2H706.55M706.55 293.2L707.14 316.8M707.14 316.8H707.90M707.90 316.8L708.49 293.2M708.49 293.2H709.25M710.60 316.8L711.19 293.2M711.19 293.2H711.95M711.95 293.2L712.54 316.8M712.54 316.8H713.30M716.00 316.8L716.59 293.2M716.59 293.2H717.35M717.35 293.2L717.94 316.8M717.94 316.8H718.70M718.70 316.8L719.29 293.2M719.29 293.2H720.05M721.40 316.8L721.99 293.2M721.99 293.2H722.75M724.10 316.8L724.69 293.2M724.69 293.2H725.45M728.15 293.2L728.74 316.8M728.74 316.8H729.50M729.50 316.8L730.09 293.2M730.09 293.2H730.85M730.85 293.2L731.44 316.8M731.44 316.8H732.20M734.90 316.8L735.49 293.2M735.49 293.2H736.25" stroke="#6c84c4" stroke-width="0.8" fill="none" opacity="0.6"/>
<path d="M709.25 293.2L709.84 316.8M709.84 316.8H710.60M713.30 316.8L713.89 293.2M713.89 293.2H714.65M725.45 293.2L726.04 316.8M726.04 316.8H726.80M733.55 293.2L734.14 316.8M734.14 316.8H734.90M737.60 316.8L738.19 293.2M738.19 293.2H738.95" stroke="#4c62a0" stroke-width="0.8" fill="none" opacity="0.5"/>
<path d="M714.65 293.2L715.24 316.8M715.24 316.8H716.00M720.05 293.2L720.64 316.8M720.64 316.8H721.40M722.75 293.2L723.34 316.8M723.34 316.8H724.10M726.80 316.8L727.39 293.2M727.39 293.2H728.15M732.20 316.8L732.79 293.2M732.79 293.2H733.55M736.25 293.2L736.84 316.8M736.84 316.8H737.60" stroke="#3c4e84" stroke-width="0.8" fill="none" opacity="0.42"/>
<path d="M705.2 293.2H738.2M705.2 316.8H738.2" stroke="#6a84c8" stroke-width="0.9" stroke-dasharray="1 1.3" fill="none" opacity="0.65"/>
<rect x="18.6" y="344.2" width="608.6" height="27" fill="#3c4438" opacity="0.55"/>
<path d="M26.22 371.8L27.06 343.6M27.06 343.6H28.13M28.13 343.6L28.96 371.8M28.96 371.8H30.03M39.56 343.6L40.39 371.8M40.39 371.8H41.46M43.37 343.6L44.20 371.8M44.20 371.8H45.27M54.80 343.6L55.63 371.8M55.63 371.8H56.70M66.23 343.6L67.06 371.8M67.06 371.8H68.13M71.94 371.8L72.78 343.6M72.78 343.6H73.85M111.95 343.6L112.78 371.8M112.78 371.8H113.85M113.85 371.8L114.69 343.6M114.69 343.6H115.76M132.90 371.8L133.74 343.6M133.74 343.6H134.81M136.71 371.8L137.55 343.6M137.55 343.6H138.62M153.86 343.6L154.69 371.8M154.69 371.8H155.76M159.57 371.8L160.41 343.6M160.41 343.6H161.48M161.48 343.6L162.31 371.8M162.31 371.8H163.38M174.81 371.8L175.65 343.6M175.65 343.6H176.72M182.43 371.8L183.27 343.6M183.27 343.6H184.34M190.05 371.8L190.89 343.6M190.89 343.6H191.96M214.82 343.6L215.65 371.8M215.65 371.8H216.72M216.72 371.8L217.56 343.6M217.56 343.6H218.63M218.63 343.6L219.46 371.8M219.46 371.8H220.53M230.06 343.6L230.89 371.8M230.89 371.8H231.96M252.92 343.6L253.75 371.8M253.75 371.8H254.82M275.77 343.6L276.61 371.8M276.61 371.8H277.68M283.39 343.6L284.23 371.8M284.23 371.8H285.30M294.82 343.6L295.66 371.8M295.66 371.8H296.73M298.63 343.6L299.47 371.8M299.47 371.8H300.54M310.06 343.6L310.90 371.8M310.90 371.8H311.97M313.87 343.6L314.71 371.8M314.71 371.8H315.78M321.49 343.6L322.33 371.8M322.33 371.8H323.40M323.40 371.8L324.24 343.6M324.24 343.6H325.30M331.02 371.8L331.86 343.6M331.86 343.6H332.92M332.92 343.6L333.76 371.8M333.76 371.8H334.83M374.83 343.6L375.67 371.8M375.67 371.8H376.74M382.45 343.6L383.29 371.8M383.29 371.8H384.36M388.17 371.8L389.01 343.6M389.01 343.6H390.07M393.88 343.6L394.72 371.8M394.72 371.8H395.79M409.12 343.6L409.96 371.8M409.96 371.8H411.03M435.79 343.6L436.63 371.8M436.63 371.8H437.70M439.60 343.6L440.44 371.8M440.44 371.8H441.51M449.13 371.8L449.97 343.6M449.97 343.6H451.03M462.46 343.6L463.30 371.8M463.30 371.8H464.37M464.37 371.8L465.21 343.6M465.21 343.6H466.27M468.18 371.8L469.02 343.6M469.02 343.6H470.08M470.08 343.6L470.92 371.8M470.92 371.8H471.99M475.80 371.8L476.64 343.6M476.64 343.6H477.70M500.56 343.6L501.40 371.8M501.40 371.8H502.47M504.37 343.6L505.21 371.8M505.21 371.8H506.28M510.09 371.8L510.93 343.6M510.93 343.6H511.99M513.90 371.8L514.74 343.6M514.74 343.6H515.80M515.80 343.6L516.64 371.8M516.64 371.8H517.71M519.61 343.6L520.45 371.8M520.45 371.8H521.52M525.33 371.8L526.17 343.6M526.17 343.6H527.23M529.14 371.8L529.98 343.6M529.98 343.6H531.04M532.95 371.8L533.79 343.6M533.79 343.6H534.85M546.28 343.6L547.12 371.8M547.12 371.8H548.19M552.00 371.8L552.84 343.6M552.84 343.6H553.90M557.71 343.6L558.55 371.8M558.55 371.8H559.62M582.48 371.8L583.32 343.6M583.32 343.6H584.38M586.29 371.8L587.13 343.6M587.13 343.6H588.19M588.19 343.6L589.03 371.8M589.03 371.8H590.10M590.10 371.8L590.94 343.6M590.94 343.6H592.00M605.34 371.8L606.18 343.6M606.18 343.6H607.24" stroke="#d4dcc4" stroke-width="0.8" fill="none" opacity="0.6"/>
<path d="M41.46 371.8L42.30 343.6M42.30 343.6H43.37M50.99 343.6L51.82 371.8M51.82 371.8H52.89M56.70 371.8L57.54 343.6M57.54 343.6H58.61M62.42 343.6L63.25 371.8M63.25 371.8H64.32M79.56 371.8L80.40 343.6M80.40 343.6H81.47M83.37 371.8L84.21 343.6M84.21 343.6H85.28M92.90 343.6L93.73 371.8M93.73 371.8H94.80M96.71 343.6L97.54 371.8M97.54 371.8H98.61M98.61 371.8L99.45 343.6M99.45 343.6H100.52M102.42 371.8L103.26 343.6M103.26 343.6H104.33M104.33 343.6L105.16 371.8M105.16 371.8H106.23M121.47 371.8L122.31 343.6M122.31 343.6H123.38M134.81 343.6L135.64 371.8M135.64 371.8H136.71M138.62 343.6L139.45 371.8M139.45 371.8H140.52M142.43 343.6L143.26 371.8M143.26 371.8H144.33M146.24 343.6L147.07 371.8M147.07 371.8H148.14M165.29 343.6L166.12 371.8M166.12 371.8H167.19M169.10 343.6L169.93 371.8M169.93 371.8H171.00M184.34 343.6L185.17 371.8M185.17 371.8H186.24M186.24 371.8L187.08 343.6M187.08 343.6H188.15M188.15 343.6L188.98 371.8M188.98 371.8H190.05M191.96 343.6L192.79 371.8M192.79 371.8H193.86M197.67 371.8L198.51 343.6M198.51 343.6H199.58M207.20 343.6L208.03 371.8M208.03 371.8H209.10M212.91 371.8L213.75 343.6M213.75 343.6H214.82M222.44 343.6L223.27 371.8M223.27 371.8H224.34M226.25 343.6L227.08 371.8M227.08 371.8H228.15M228.15 371.8L228.99 343.6M228.99 343.6H230.06M233.87 343.6L234.70 371.8M234.70 371.8H235.77M239.58 371.8L240.42 343.6M240.42 343.6H241.49M251.01 371.8L251.85 343.6M251.85 343.6H252.92M266.25 371.8L267.09 343.6M267.09 343.6H268.15M270.06 371.8L270.90 343.6M270.90 343.6H271.96M279.58 343.6L280.42 371.8M280.42 371.8H281.49M285.30 371.8L286.14 343.6M286.14 343.6H287.20M287.20 343.6L288.04 371.8M288.04 371.8H289.11M289.11 371.8L289.95 343.6M289.95 343.6H291.01M315.78 371.8L316.62 343.6M316.62 343.6H317.68M317.68 343.6L318.52 371.8M318.52 371.8H319.59M346.26 371.8L347.10 343.6M347.10 343.6H348.16M359.59 343.6L360.43 371.8M360.43 371.8H361.50M367.21 343.6L368.05 371.8M368.05 371.8H369.12M371.02 343.6L371.86 371.8M371.86 371.8H372.93M384.36 371.8L385.20 343.6M385.20 343.6H386.26M390.07 343.6L390.91 371.8M390.91 371.8H391.98M395.79 371.8L396.63 343.6M396.63 343.6H397.69M399.60 371.8L400.44 343.6M400.44 343.6H401.50M403.41 371.8L404.25 343.6M404.25 343.6H405.31M407.22 371.8L408.06 343.6M408.06 343.6H409.12M414.84 371.8L415.68 343.6M415.68 343.6H416.74M416.74 343.6L417.58 371.8M417.58 371.8H418.65M418.65 371.8L419.49 343.6M419.49 343.6H420.55M430.08 371.8L430.92 343.6M430.92 343.6H431.98M466.27 343.6L467.11 371.8M467.11 371.8H468.18M477.70 343.6L478.54 371.8M478.54 371.8H479.61M481.51 343.6L482.35 371.8M482.35 371.8H483.42M489.13 343.6L489.97 371.8M489.97 371.8H491.04M506.28 371.8L507.12 343.6M507.12 343.6H508.18M523.42 343.6L524.26 371.8M524.26 371.8H525.33M544.38 371.8L545.22 343.6M545.22 343.6H546.28M550.09 343.6L550.93 371.8M550.93 371.8H552.00M553.90 343.6L554.74 371.8M554.74 371.8H555.81M559.62 371.8L560.46 343.6M560.46 343.6H561.52M561.52 343.6L562.36 371.8M562.36 371.8H563.43M569.14 343.6L569.98 371.8M569.98 371.8H571.05M576.76 343.6L577.60 371.8M577.60 371.8H578.67M595.81 343.6L596.65 371.8M596.65 371.8H597.72M601.53 371.8L602.37 343.6M602.37 343.6H603.43M618.67 343.6L619.51 371.8M619.51 371.8H620.58M620.58 371.8L621.42 343.6M621.42 343.6H622.48M624.39 371.8L625.23 343.6M625.23 343.6H626.29M626.29 343.6L627.13 371.8M627.13 371.8H628.20" stroke="#a8b29a" stroke-width="0.8" fill="none" opacity="0.5"/>
<path d="M18.60 371.8L19.44 343.6M19.44 343.6H20.51M22.41 371.8L23.25 343.6M23.25 343.6H24.32M37.65 371.8L38.49 343.6M38.49 343.6H39.56M45.27 371.8L46.11 343.6M46.11 343.6H47.18M47.18 343.6L48.01 371.8M48.01 371.8H49.08M60.51 371.8L61.35 343.6M61.35 343.6H62.42M70.04 343.6L70.87 371.8M70.87 371.8H71.94M73.85 343.6L74.68 371.8M74.68 371.8H75.75M77.66 343.6L78.49 371.8M78.49 371.8H79.56M81.47 343.6L82.30 371.8M82.30 371.8H83.37M90.99 371.8L91.83 343.6M91.83 343.6H92.90M110.04 371.8L110.88 343.6M110.88 343.6H111.95M115.76 343.6L116.59 371.8M116.59 371.8H117.66M119.57 343.6L120.40 371.8M120.40 371.8H121.47M125.28 371.8L126.12 343.6M126.12 343.6H127.19M129.09 371.8L129.93 343.6M129.93 343.6H131.00M131.00 343.6L131.83 371.8M131.83 371.8H132.90M144.33 371.8L145.17 343.6M145.17 343.6H146.24M157.67 343.6L158.50 371.8M158.50 371.8H159.57M172.91 343.6L173.74 371.8M173.74 371.8H174.81M205.29 371.8L206.13 343.6M206.13 343.6H207.20M231.96 371.8L232.80 343.6M232.80 343.6H233.87M235.77 371.8L236.61 343.6M236.61 343.6H237.68M243.39 371.8L244.23 343.6M244.23 343.6H245.30M245.30 343.6L246.13 371.8M246.13 371.8H247.20M254.82 371.8L255.66 343.6M255.66 343.6H256.73M300.54 371.8L301.38 343.6M301.38 343.6H302.44M319.59 371.8L320.43 343.6M320.43 343.6H321.49M336.73 343.6L337.57 371.8M337.57 371.8H338.64M348.16 343.6L349.00 371.8M349.00 371.8H350.07M363.40 343.6L364.24 371.8M364.24 371.8H365.31M380.55 371.8L381.39 343.6M381.39 343.6H382.45M391.98 371.8L392.82 343.6M392.82 343.6H393.88M397.69 343.6L398.53 371.8M398.53 371.8H399.60M401.50 343.6L402.34 371.8M402.34 371.8H403.41M426.27 371.8L427.11 343.6M427.11 343.6H428.17M431.98 343.6L432.82 371.8M432.82 371.8H433.89M433.89 371.8L434.73 343.6M434.73 343.6H435.79M437.70 371.8L438.54 343.6M438.54 343.6H439.60M441.51 371.8L442.35 343.6M442.35 343.6H443.41M452.94 371.8L453.78 343.6M453.78 343.6H454.84M458.65 343.6L459.49 371.8M459.49 371.8H460.56M471.99 371.8L472.83 343.6M472.83 343.6H473.89M473.89 343.6L474.73 371.8M474.73 371.8H475.80M479.61 371.8L480.45 343.6M480.45 343.6H481.51M485.32 343.6L486.16 371.8M486.16 371.8H487.23M498.66 371.8L499.50 343.6M499.50 343.6H500.56M502.47 371.8L503.31 343.6M503.31 343.6H504.37M511.99 343.6L512.83 371.8M512.83 371.8H513.90M517.71 371.8L518.55 343.6M518.55 343.6H519.61M527.23 343.6L528.07 371.8M528.07 371.8H529.14M534.85 343.6L535.69 371.8M535.69 371.8H536.76M540.57 371.8L541.41 343.6M541.41 343.6H542.47M555.81 371.8L556.65 343.6M556.65 343.6H557.71M563.43 371.8L564.27 343.6M564.27 343.6H565.33M565.33 343.6L566.17 371.8M566.17 371.8H567.24M571.05 371.8L571.89 343.6M571.89 343.6H572.95M578.67 371.8L579.51 343.6M579.51 343.6H580.57M580.57 343.6L581.41 371.8M581.41 371.8H582.48M584.38 343.6L585.22 371.8M585.22 371.8H586.29M616.77 371.8L617.61 343.6M617.61 343.6H618.67M622.48 343.6L623.32 371.8M623.32 371.8H624.39" stroke="#8a947e" stroke-width="0.8" fill="none" opacity="0.42"/>
<path d="M24.32 343.6L25.15 371.8M25.15 371.8H26.22M30.03 371.8L30.87 343.6M30.87 343.6H31.94M31.94 343.6L32.77 371.8M32.77 371.8H33.84M33.84 371.8L34.68 343.6M34.68 343.6H35.75M35.75 343.6L36.58 371.8M36.58 371.8H37.65M49.08 371.8L49.92 343.6M49.92 343.6H50.99M100.52 343.6L101.35 371.8M101.35 371.8H102.42M108.14 343.6L108.97 371.8M108.97 371.8H110.04M117.66 371.8L118.50 343.6M118.50 343.6H119.57M127.19 343.6L128.02 371.8M128.02 371.8H129.09M140.52 371.8L141.36 343.6M141.36 343.6H142.43M148.14 371.8L148.98 343.6M148.98 343.6H150.05M155.76 371.8L156.60 343.6M156.60 343.6H157.67M163.38 371.8L164.22 343.6M164.22 343.6H165.29M167.19 371.8L168.03 343.6M168.03 343.6H169.10M171.00 371.8L171.84 343.6M171.84 343.6H172.91M176.72 343.6L177.55 371.8M177.55 371.8H178.62M178.62 371.8L179.46 343.6M179.46 343.6H180.53M180.53 343.6L181.36 371.8M181.36 371.8H182.43M195.77 343.6L196.60 371.8M196.60 371.8H197.67M203.39 343.6L204.22 371.8M204.22 371.8H205.29M224.34 371.8L225.18 343.6M225.18 343.6H226.25M249.11 343.6L249.94 371.8M249.94 371.8H251.01M256.73 343.6L257.56 371.8M257.56 371.8H258.63M262.44 371.8L263.28 343.6M263.28 343.6H264.35M277.68 371.8L278.52 343.6M278.52 343.6H279.58M291.01 343.6L291.85 371.8M291.85 371.8H292.92M308.16 371.8L309.00 343.6M309.00 343.6H310.06M327.21 371.8L328.05 343.6M328.05 343.6H329.11M334.83 371.8L335.67 343.6M335.67 343.6H336.73M350.07 371.8L350.91 343.6M350.91 343.6H351.97M355.78 343.6L356.62 371.8M356.62 371.8H357.69M369.12 371.8L369.96 343.6M369.96 343.6H371.02M372.93 371.8L373.77 343.6M373.77 343.6H374.83M376.74 371.8L377.58 343.6M377.58 343.6H378.64M378.64 343.6L379.48 371.8M379.48 371.8H380.55M386.26 343.6L387.10 371.8M387.10 371.8H388.17M405.31 343.6L406.15 371.8M406.15 371.8H407.22M411.03 371.8L411.87 343.6M411.87 343.6H412.93M412.93 343.6L413.77 371.8M413.77 371.8H414.84M420.55 343.6L421.39 371.8M421.39 371.8H422.46M424.36 343.6L425.20 371.8M425.20 371.8H426.27M428.17 343.6L429.01 371.8M429.01 371.8H430.08M445.32 371.8L446.16 343.6M446.16 343.6H447.22M447.22 343.6L448.06 371.8M448.06 371.8H449.13M451.03 343.6L451.87 371.8M451.87 371.8H452.94M483.42 371.8L484.26 343.6M484.26 343.6H485.32M487.23 371.8L488.07 343.6M488.07 343.6H489.13M496.75 343.6L497.59 371.8M497.59 371.8H498.66M508.18 343.6L509.02 371.8M509.02 371.8H510.09M531.04 343.6L531.88 371.8M531.88 371.8H532.95M538.66 343.6L539.50 371.8M539.50 371.8H540.57M572.95 343.6L573.79 371.8M573.79 371.8H574.86M599.62 343.6L600.46 371.8M600.46 371.8H601.53M603.43 343.6L604.27 371.8M604.27 371.8H605.34M607.24 343.6L608.08 371.8M608.08 371.8H609.15M609.15 371.8L609.99 343.6M609.99 343.6H611.05M612.96 371.8L613.80 343.6M613.80 343.6H614.86" stroke="#6c7664" stroke-width="0.8" fill="none" opacity="0.38"/>
<path d="M20.51 343.6L21.34 371.8M21.34 371.8H22.41M52.89 371.8L53.73 343.6M53.73 343.6H54.80M58.61 343.6L59.44 371.8M59.44 371.8H60.51M64.32 371.8L65.16 343.6M65.16 343.6H66.23M68.13 371.8L68.97 343.6M68.97 343.6H70.04M75.75 371.8L76.59 343.6M76.59 343.6H77.66M85.28 343.6L86.11 371.8M86.11 371.8H87.18M87.18 371.8L88.02 343.6M88.02 343.6H89.09M89.09 343.6L89.92 371.8M89.92 371.8H90.99M94.80 371.8L95.64 343.6M95.64 343.6H96.71M106.23 371.8L107.07 343.6M107.07 343.6H108.14M123.38 343.6L124.21 371.8M124.21 371.8H125.28M150.05 343.6L150.88 371.8M150.88 371.8H151.95M151.95 371.8L152.79 343.6M152.79 343.6H153.86M193.86 371.8L194.70 343.6M194.70 343.6H195.77M199.58 343.6L200.41 371.8M200.41 371.8H201.48M201.48 371.8L202.32 343.6M202.32 343.6H203.39M209.10 371.8L209.94 343.6M209.94 343.6H211.01M211.01 343.6L211.84 371.8M211.84 371.8H212.91M220.53 371.8L221.37 343.6M221.37 343.6H222.44M237.68 343.6L238.51 371.8M238.51 371.8H239.58M241.49 343.6L242.32 371.8M242.32 371.8H243.39M247.20 371.8L248.04 343.6M248.04 343.6H249.11M258.63 371.8L259.47 343.6M259.47 343.6H260.54M260.54 343.6L261.37 371.8M261.37 371.8H262.44M264.35 343.6L265.18 371.8M265.18 371.8H266.25M268.15 343.6L268.99 371.8M268.99 371.8H270.06M271.96 343.6L272.80 371.8M272.80 371.8H273.87M273.87 371.8L274.71 343.6M274.71 343.6H275.77M281.49 371.8L282.33 343.6M282.33 343.6H283.39M292.92 371.8L293.76 343.6M293.76 343.6H294.82M296.73 371.8L297.57 343.6M297.57 343.6H298.63M302.44 343.6L303.28 371.8M303.28 371.8H304.35M304.35 371.8L305.19 343.6M305.19 343.6H306.25M306.25 343.6L307.09 371.8M307.09 371.8H308.16M311.97 371.8L312.81 343.6M312.81 343.6H313.87M325.30 343.6L326.14 371.8M326.14 371.8H327.21M329.11 343.6L329.95 371.8M329.95 371.8H331.02M338.64 371.8L339.48 343.6M339.48 343.6H340.54M340.54 343.6L341.38 371.8M341.38 371.8H342.45M342.45 371.8L343.29 343.6M343.29 343.6H344.35M344.35 343.6L345.19 371.8M345.19 371.8H346.26M351.97 343.6L352.81 371.8M352.81 371.8H353.88M353.88 371.8L354.72 343.6M354.72 343.6H355.78M357.69 371.8L358.53 343.6M358.53 343.6H359.59M361.50 371.8L362.34 343.6M362.34 343.6H363.40M365.31 371.8L366.15 343.6M366.15 343.6H367.21M422.46 371.8L423.30 343.6M423.30 343.6H424.36M443.41 343.6L444.25 371.8M444.25 371.8H445.32M454.84 343.6L455.68 371.8M455.68 371.8H456.75M456.75 371.8L457.59 343.6M457.59 343.6H458.65M460.56 371.8L461.40 343.6M461.40 343.6H462.46M491.04 371.8L491.88 343.6M491.88 343.6H492.94M492.94 343.6L493.78 371.8M493.78 371.8H494.85M494.85 371.8L495.69 343.6M495.69 343.6H496.75M521.52 371.8L522.36 343.6M522.36 343.6H523.42M536.76 371.8L537.60 343.6M537.60 343.6H538.66M542.47 343.6L543.31 371.8M543.31 371.8H544.38M548.19 371.8L549.03 343.6M549.03 343.6H550.09M567.24 371.8L568.08 343.6M568.08 343.6H569.14M574.86 371.8L575.70 343.6M575.70 343.6H576.76M592.00 343.6L592.84 371.8M592.84 371.8H593.91M593.91 371.8L594.75 343.6M594.75 343.6H595.81M597.72 371.8L598.56 343.6M598.56 343.6H599.62M611.05 343.6L611.89 371.8M611.89 371.8H612.96M614.86 343.6L615.70 371.8M615.70 371.8H616.77" stroke="#565e50" stroke-width="0.8" fill="none" opacity="0.32"/>
<path d="M18.6 343.6H628M19.8 371.8H628" stroke="#e6efc8" stroke-width="1.0" stroke-dasharray="1.3 2.51" fill="none" opacity="0.95"/>
</g>
<path d="M613.4 229.4H626V239.4z" fill="#8a8a8a"/><path d="M617 230.4h8v6.4z" fill="#b5b5b5"/>
<path d="M19 271.4h8.4l2.6 2.9-2.6 2.9H19z" fill="#2e2e2e" stroke="#bdbdbd" stroke-width="0.8"/>
<path d="M19 302.9h8.4l2.6 2.9-2.6 2.9H19z" fill="#1e2a48" stroke="#6a86cc" stroke-width="0.8"/>
<path d="M19.4 355.4h8.6l3.2 3.5-3.2 3.5H19.4z" fill="#c6e6b0" stroke="#d8f0c4" stroke-width="0.6"/>
</svg>
<span style="left:20.40px;top:272.12px;font-size:3.8px;line-height:4.56px;color:#ddd;font-weight:700;">R1</span>
<span style="left:20.40px;top:303.62px;font-size:3.8px;line-height:4.56px;color:#9ab4f0;font-weight:700;">R2</span>
<span style="left:21.00px;top:356.72px;font-size:3.8px;line-height:4.56px;color:#2a3a20;font-weight:700;">R3</span>
<span style="left:-20.00px;width:200px;text-align:center;top:379.08px;font-size:4.2px;line-height:5.04px;color:#8c8c8c;font-weight:400;">240 ns</span>
<span style="left:40.80px;width:200px;text-align:center;top:379.08px;font-size:4.2px;line-height:5.04px;color:#8c8c8c;font-weight:400;">320 ns</span>
<span style="left:100.40px;width:200px;text-align:center;top:379.08px;font-size:4.2px;line-height:5.04px;color:#8c8c8c;font-weight:400;">0 s</span>
<span style="left:163.00px;width:200px;text-align:center;top:379.08px;font-size:4.2px;line-height:5.04px;color:#8c8c8c;font-weight:400;">40 ns</span>
<span style="left:224.00px;width:200px;text-align:center;top:379.08px;font-size:4.2px;line-height:5.04px;color:#8c8c8c;font-weight:400;">0 s</span>
<span style="left:284.00px;width:200px;text-align:center;top:379.08px;font-size:4.2px;line-height:5.04px;color:#8c8c8c;font-weight:400;">40 ns</span>
<span style="left:347.60px;width:200px;text-align:center;top:379.08px;font-size:4.2px;line-height:5.04px;color:#8c8c8c;font-weight:400;">80 ns</span>
<span style="left:408.40px;width:200px;text-align:center;top:379.08px;font-size:4.2px;line-height:5.04px;color:#8c8c8c;font-weight:400;">120 ns</span>
<span style="left:466.60px;width:200px;text-align:center;top:379.08px;font-size:4.2px;line-height:5.04px;color:#8c8c8c;font-weight:400;">160 ns</span>
<span style="left:425.60px;width:200px;text-align:right;top:241.08px;font-size:4.2px;line-height:5.04px;color:#8a8a8a;font-weight:400;">1.2 V</span>
<span style="left:425.60px;width:200px;text-align:right;top:251.48px;font-size:4.2px;line-height:5.04px;color:#8a8a8a;font-weight:400;">800 mV</span>
<span style="left:425.60px;width:200px;text-align:right;top:261.48px;font-size:4.2px;line-height:5.04px;color:#8a8a8a;font-weight:400;">400 mV</span>
<span style="left:425.60px;width:200px;text-align:right;top:271.48px;font-size:4.2px;line-height:5.04px;color:#8a8a8a;font-weight:400;">0 V</span>
<span style="left:425.60px;width:200px;text-align:right;top:283.08px;font-size:4.2px;line-height:5.04px;color:#4e68b0;font-weight:400;">1.2 V</span>
<span style="left:425.60px;width:200px;text-align:right;top:293.28px;font-size:4.2px;line-height:5.04px;color:#4e68b0;font-weight:400;">600 mV</span>
<span style="left:425.60px;width:200px;text-align:right;top:314.08px;font-size:4.2px;line-height:5.04px;color:#4e68b0;font-weight:400;">-600 mV</span>
<span style="left:425.60px;width:200px;text-align:right;top:324.08px;font-size:4.2px;line-height:5.04px;color:#4e68b0;font-weight:400;">-1.2 V</span>
<span style="left:425.60px;width:200px;text-align:right;top:335.68px;font-size:4.2px;line-height:5.04px;color:#8fa878;font-weight:400;">1.2 V</span>
<span style="left:425.60px;width:200px;text-align:right;top:344.08px;font-size:4.2px;line-height:5.04px;color:#8fa878;font-weight:400;">800 mV</span>
<span style="left:425.60px;width:200px;text-align:right;top:348.88px;font-size:4.2px;line-height:5.04px;color:#8fa878;font-weight:400;">400 mV</span>
<span style="left:425.60px;width:200px;text-align:right;top:353.68px;font-size:4.2px;line-height:5.04px;color:#8fa878;font-weight:400;">0 V</span>
<span style="left:425.60px;width:200px;text-align:right;top:358.48px;font-size:4.2px;line-height:5.04px;color:#8fa878;font-weight:400;">-400 mV</span>
<span style="left:425.60px;width:200px;text-align:right;top:363.28px;font-size:4.2px;line-height:5.04px;color:#8fa878;font-weight:400;">-800 mV</span>
<span style="left:425.60px;width:200px;text-align:right;top:368.08px;font-size:4.2px;line-height:5.04px;color:#8fa878;font-weight:400;">-1.2 V</span>
<span style="left:425.60px;width:200px;text-align:right;top:377.48px;font-size:4.2px;line-height:5.04px;color:#8fa878;font-weight:400;">-1.2 V</span>
<div style="left:17.60px;top:385.20px;width:628.40px;height:30.00px;background:#2a2a2a;"></div>
<div style="left:18.80px;top:387.60px;width:31.50px;height:6.90px;background:#bca42a;border-radius:1.4px 1.4px 0 0;"></div>
<span style="left:21.00px;top:388.20px;font-size:5.0px;line-height:6.00px;color:#4a4014;font-weight:700;">Ch 1</span>
<div style="left:18.80px;top:394.50px;width:31.50px;height:20.10px;background:#949494;"></div>
<span style="left:21.80px;top:395.70px;font-size:5.0px;line-height:6.00px;color:#5a5a5a;font-weight:400;-webkit-text-stroke:0.1px #5a5a5a;">200 mV/div</span>
<span style="left:21.80px;top:401.70px;font-size:5.0px;line-height:6.00px;color:#5a5a5a;font-weight:400;-webkit-text-stroke:0.1px #5a5a5a;">Ter...</span>
<span style="left:21.80px;top:407.70px;font-size:5.0px;line-height:6.00px;color:#5a5a5a;font-weight:400;-webkit-text-stroke:0.1px #5a5a5a;">1 GHz</span>
<span style="left:45.60px;top:407.76px;font-size:4.4px;line-height:5.28px;color:#333;font-weight:700;">ᴮw</span>
<div style="left:51.60px;top:387.60px;width:31.40px;height:6.90px;background:#4a4a4a;border-radius:1.4px 1.4px 0 0;"></div>
<span style="left:53.80px;top:388.20px;font-size:5.0px;line-height:6.00px;color:#f0f0f0;font-weight:700;">Ref 1</span>
<div style="left:51.60px;top:394.50px;width:31.40px;height:20.10px;background:#dcdcdc;"></div>
<span style="left:54.60px;top:395.70px;font-size:5.0px;line-height:6.00px;color:#1a1a1a;font-weight:400;-webkit-text-stroke:0.1px #1a1a1a;">200 mV/div</span>
<span style="left:54.60px;top:401.70px;font-size:5.0px;line-height:6.00px;color:#1a1a1a;font-weight:400;-webkit-text-stroke:0.1px #1a1a1a;">25 GS/s</span>
<span style="left:54.60px;top:407.70px;font-size:5.0px;line-height:6.00px;color:#1a1a1a;font-weight:400;-webkit-text-stroke:0.1px #1a1a1a;">DDR3_80...</span>
<div style="left:85.00px;top:387.60px;width:31.20px;height:6.90px;background:#27375c;border-radius:1.4px 1.4px 0 0;"></div>
<span style="left:87.20px;top:388.20px;font-size:5.0px;line-height:6.00px;color:#7fa2ee;font-weight:700;">Ref 2</span>
<div style="left:85.00px;top:394.50px;width:31.20px;height:20.10px;background:#dcdcdc;"></div>
<span style="left:88.00px;top:395.70px;font-size:5.0px;line-height:6.00px;color:#1a1a1a;font-weight:400;-webkit-text-stroke:0.1px #1a1a1a;">300 mV/div</span>
<span style="left:88.00px;top:401.70px;font-size:5.0px;line-height:6.00px;color:#1a1a1a;font-weight:400;-webkit-text-stroke:0.1px #1a1a1a;">25 GS/s</span>
<span style="left:88.00px;top:407.70px;font-size:5.0px;line-height:6.00px;color:#1a1a1a;font-weight:400;-webkit-text-stroke:0.1px #1a1a1a;">DDR3_80...</span>
<div style="left:118.00px;top:387.60px;width:31.60px;height:6.90px;background:#b4e2a0;border-radius:1.4px 1.4px 0 0;"></div>
<span style="left:120.20px;top:388.20px;font-size:5.0px;line-height:6.00px;color:#1c2a14;font-weight:700;">Ref 3</span>
<div style="left:118.00px;top:394.50px;width:31.60px;height:20.10px;background:#dcdcdc;"></div>
<span style="left:121.00px;top:395.70px;font-size:5.0px;line-height:6.00px;color:#1a1a1a;font-weight:400;-webkit-text-stroke:0.1px #1a1a1a;">300 mV/div</span>
<span style="left:121.00px;top:401.70px;font-size:5.0px;line-height:6.00px;color:#1a1a1a;font-weight:400;-webkit-text-stroke:0.1px #1a1a1a;">25 GS/s</span>
<span style="left:121.00px;top:407.70px;font-size:5.0px;line-height:6.00px;color:#1a1a1a;font-weight:400;-webkit-text-stroke:0.1px #1a1a1a;">DDR3_80...</span>
<div style="left:256.40px;top:388.00px;width:13.20px;height:25.80px;background:#3b3b3b;border:0.6px solid #4a4a4a;box-sizing:border-box;border-radius:1.2px;"></div>
<div style="left:257.80px;top:389.60px;width:10.40px;height:1.10px;background:#2fb4b4;"></div>
<span style="left:163.00px;width:200px;text-align:center;top:398.48px;font-size:6.2px;line-height:7.44px;color:#f0f0f0;font-weight:700;">2</span>
<div style="left:272.12px;top:388.00px;width:13.20px;height:25.80px;background:#3b3b3b;border:0.6px solid #4a4a4a;box-sizing:border-box;border-radius:1.2px;"></div>
<div style="left:273.52px;top:389.60px;width:10.40px;height:1.10px;background:#c8325a;"></div>
<span style="left:178.72px;width:200px;text-align:center;top:398.48px;font-size:6.2px;line-height:7.44px;color:#f0f0f0;font-weight:700;">3</span>
<div style="left:287.84px;top:388.00px;width:13.20px;height:25.80px;background:#3b3b3b;border:0.6px solid #4a4a4a;box-sizing:border-box;border-radius:1.2px;"></div>
<div style="left:289.24px;top:389.60px;width:10.40px;height:1.10px;background:#6aa832;"></div>
<span style="left:194.44px;width:200px;text-align:center;top:398.48px;font-size:6.2px;line-height:7.44px;color:#f0f0f0;font-weight:700;">4</span>
<div style="left:303.56px;top:388.00px;width:13.20px;height:25.80px;background:#3b3b3b;border:0.6px solid #4a4a4a;box-sizing:border-box;border-radius:1.2px;"></div>
<div style="left:304.96px;top:389.60px;width:10.40px;height:1.10px;background:#c8781e;"></div>
<span style="left:210.16px;width:200px;text-align:center;top:398.48px;font-size:6.2px;line-height:7.44px;color:#f0f0f0;font-weight:700;">5</span>
<div style="left:319.28px;top:388.00px;width:13.20px;height:25.80px;background:#3b3b3b;border:0.6px solid #4a4a4a;box-sizing:border-box;border-radius:1.2px;"></div>
<div style="left:320.68px;top:389.60px;width:10.40px;height:1.10px;background:#3838c8;"></div>
<span style="left:225.88px;width:200px;text-align:center;top:398.48px;font-size:6.2px;line-height:7.44px;color:#f0f0f0;font-weight:700;">6</span>
<div style="left:335.00px;top:388.00px;width:13.20px;height:25.80px;background:#3b3b3b;border:0.6px solid #4a4a4a;box-sizing:border-box;border-radius:1.2px;"></div>
<div style="left:336.40px;top:389.60px;width:10.40px;height:1.10px;background:#c846a8;"></div>
<span style="left:241.60px;width:200px;text-align:center;top:398.48px;font-size:6.2px;line-height:7.44px;color:#f0f0f0;font-weight:700;">7</span>
<div style="left:350.72px;top:388.00px;width:13.20px;height:25.80px;background:#3b3b3b;border:0.6px solid #4a4a4a;box-sizing:border-box;border-radius:1.2px;"></div>
<div style="left:352.12px;top:389.60px;width:10.40px;height:1.10px;background:#1fa884;"></div>
<span style="left:257.32px;width:200px;text-align:center;top:398.48px;font-size:6.2px;line-height:7.44px;color:#f0f0f0;font-weight:700;">8</span>
<div style="left:371.60px;top:388.00px;width:13.60px;height:25.80px;background:#3b3b3b;border:0.6px solid #4a4a4a;box-sizing:border-box;border-radius:1.2px;"></div>
<div style="left:373.00px;top:389.60px;width:10.80px;height:1.10px;background:#c8781e;"></div>
<span style="left:278.40px;width:200px;text-align:center;top:394.22px;font-size:4.3px;line-height:5.16px;color:#c8c8c8;font-weight:700;">Add</span>
<span style="left:278.40px;width:200px;text-align:center;top:399.72px;font-size:4.3px;line-height:5.16px;color:#c8c8c8;font-weight:700;">New</span>
<span style="left:278.40px;width:200px;text-align:center;top:405.22px;font-size:4.3px;line-height:5.16px;color:#c8c8c8;font-weight:700;">Math</span>
<div style="left:387.20px;top:388.00px;width:13.60px;height:25.80px;background:#3b3b3b;border:0.6px solid #4a4a4a;box-sizing:border-box;border-radius:1.2px;"></div>
<div style="left:388.60px;top:389.60px;width:10.80px;height:1.10px;background:#2fa8a0;"></div>
<span style="left:294.00px;width:200px;text-align:center;top:394.22px;font-size:4.3px;line-height:5.16px;color:#c8c8c8;font-weight:700;">Add</span>
<span style="left:294.00px;width:200px;text-align:center;top:399.72px;font-size:4.3px;line-height:5.16px;color:#c8c8c8;font-weight:700;">New</span>
<span style="left:294.00px;width:200px;text-align:center;top:405.22px;font-size:4.3px;line-height:5.16px;color:#c8c8c8;font-weight:700;">Ref</span>
<div style="left:402.80px;top:388.00px;width:13.60px;height:25.80px;background:#3b3b3b;border:0.6px solid #4a4a4a;box-sizing:border-box;border-radius:1.2px;"></div>
<div style="left:404.20px;top:389.60px;width:10.80px;height:1.10px;background:#8a4cc8;"></div>
<span style="left:309.60px;width:200px;text-align:center;top:394.22px;font-size:4.3px;line-height:5.16px;color:#c8c8c8;font-weight:700;">Add</span>
<span style="left:309.60px;width:200px;text-align:center;top:399.72px;font-size:4.3px;line-height:5.16px;color:#c8c8c8;font-weight:700;">New</span>
<span style="left:309.60px;width:200px;text-align:center;top:405.22px;font-size:4.3px;line-height:5.16px;color:#c8c8c8;font-weight:700;">Bus</span>
<div style="left:424.60px;top:388.00px;width:14.00px;height:25.80px;background:#3b3b3b;border:0.6px solid #4a4a4a;box-sizing:border-box;border-radius:1.2px;"></div>
<span style="left:331.60px;width:200px;text-align:center;top:400.10px;font-size:4.5px;line-height:5.40px;color:#c8c8c8;font-weight:700;">DVM</span>
<div style="left:442.00px;top:388.00px;width:13.60px;height:25.80px;background:#3b3b3b;border:0.6px solid #4a4a4a;box-sizing:border-box;border-radius:1.2px;"></div>
<span style="left:348.80px;width:200px;text-align:center;top:400.10px;font-size:4.5px;line-height:5.40px;color:#c8c8c8;font-weight:700;">AFG</span>
<div style="left:463.20px;top:387.90px;width:69.40px;height:6.10px;background:#6c6c6c;border-radius:1.4px 1.4px 0 0;"></div>
<span style="left:465.80px;top:388.16px;font-size:4.9px;line-height:5.88px;color:#b9b9b9;font-weight:700;">Horizontal</span>
<div style="left:463.20px;top:394.00px;width:69.40px;height:20.10px;background:#d8d8d8;"></div>
<span style="left:466.40px;top:396.00px;font-size:5.0px;line-height:6.00px;color:#1a1a1a;font-weight:400;-webkit-text-stroke:0.1px #1a1a1a;">40 ns/div</span>
<span style="left:503.60px;top:396.00px;font-size:5.0px;line-height:6.00px;color:#1a1a1a;font-weight:400;-webkit-text-stroke:0.1px #1a1a1a;">400 ns</span>
<span style="left:466.40px;top:402.00px;font-size:5.0px;line-height:6.00px;color:#1a1a1a;font-weight:400;-webkit-text-stroke:0.1px #1a1a1a;">SR: 25 GS/s</span>
<span style="left:503.60px;top:402.00px;font-size:5.0px;line-height:6.00px;color:#1a1a1a;font-weight:400;-webkit-text-stroke:0.1px #1a1a1a;">40 ps/pt</span>
<span style="left:466.40px;top:408.00px;font-size:5.0px;line-height:6.00px;color:#1a1a1a;font-weight:400;-webkit-text-stroke:0.1px #1a1a1a;">RL: 10 kpts</span>
<span style="left:507.40px;top:408.00px;font-size:5.0px;line-height:6.00px;color:#1a1a1a;font-weight:400;-webkit-text-stroke:0.1px #1a1a1a;">50%</span>
<div style="left:502.60px;top:409.20px;width:3.40px;height:3.40px;background:#e8901c;border-radius:50%;"></div>
<div style="left:535.00px;top:387.90px;width:54.20px;height:6.10px;background:#6c6c6c;border-radius:1.4px 1.4px 0 0;"></div>
<span style="left:537.60px;top:388.16px;font-size:4.9px;line-height:5.88px;color:#b9b9b9;font-weight:700;">Trigger</span>
<div style="left:535.00px;top:394.00px;width:54.20px;height:20.10px;background:#d8d8d8;"></div>
<div style="left:537.60px;top:396.60px;width:10.00px;height:6.20px;background:#efe23a;border-radius:1.6px;border:0.5px solid #a8a020;box-sizing:border-box;"></div>
<span style="left:442.60px;width:200px;text-align:center;top:397.16px;font-size:4.4px;line-height:5.28px;color:#333;font-weight:700;">1</span>
<svg width="700" height="430" viewBox="0 0 700 430"><path d="M551 402.4h1.4l2.6-5h1.6" fill="none" stroke="#5a6aa8" stroke-width="0.7"/></svg>
<span style="left:560.40px;top:396.80px;font-size:5.0px;line-height:6.00px;color:#1a1a1a;font-weight:400;-webkit-text-stroke:0.1px #1a1a1a;">0 V</span>
<div style="left:592.40px;top:387.90px;width:50.80px;height:6.10px;background:#6c6c6c;border-radius:1.4px 1.4px 0 0;"></div>
<span style="left:595.00px;top:388.16px;font-size:4.9px;line-height:5.88px;color:#b9b9b9;font-weight:700;">Acquisition</span>
<div style="left:592.40px;top:394.00px;width:50.80px;height:20.10px;background:#d8d8d8;"></div>
<span style="left:595.40px;top:396.00px;font-size:5.0px;line-height:6.00px;color:#1a1a1a;font-weight:400;-webkit-text-stroke:0.1px #1a1a1a;">Manual,</span>
<span style="left:622.60px;top:396.00px;font-size:5.0px;line-height:6.00px;color:#1a1a1a;font-weight:400;-webkit-text-stroke:0.1px #1a1a1a;">Analyze</span>
<span style="left:595.40px;top:402.00px;font-size:5.0px;line-height:6.00px;color:#1a1a1a;font-weight:400;-webkit-text-stroke:0.1px #1a1a1a;">Sample: 8 bits</span>
<span style="left:595.40px;top:408.00px;font-size:5.0px;line-height:6.00px;color:#1a1a1a;font-weight:400;-webkit-text-stroke:0.1px #1a1a1a;">0 Acqs</span>
<div style="left:17.60px;top:414.60px;width:668.40px;height:0.60px;background:#1c1c1c;"></div>
</div>
</body></html>
